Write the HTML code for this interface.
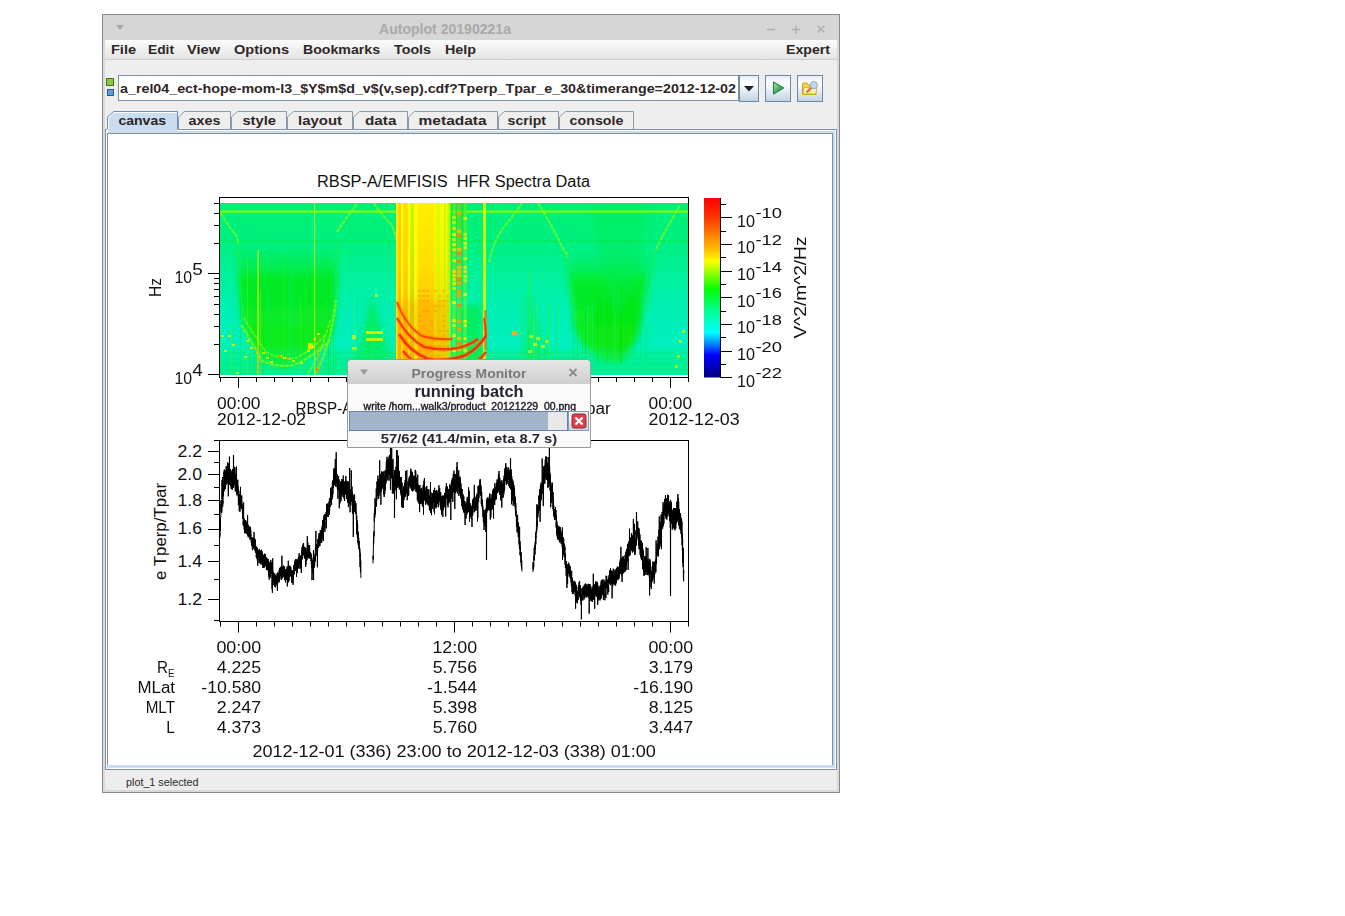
<!DOCTYPE html>
<html><head><meta charset="utf-8"><style>
html,body{margin:0;padding:0;background:#fff;width:1345px;height:916px;overflow:hidden}
svg{display:block;font-family:"Liberation Sans", sans-serif}
</style></head><body>
<svg width="1345" height="916" viewBox="0 0 1345 916">
<defs><linearGradient id="menug" x1="0" y1="0" x2="0" y2="1"><stop offset="0" stop-color="#fbfbfb"/><stop offset="1" stop-color="#e4e4e4"/></linearGradient><linearGradient id="btng" x1="0" y1="0" x2="0" y2="1"><stop offset="0" stop-color="#e4ecf6"/><stop offset="0.3" stop-color="#ffffff"/><stop offset="1" stop-color="#bfd2e6"/></linearGradient><linearGradient id="playg" x1="0" y1="0" x2="1" y2="1"><stop offset="0" stop-color="#c0e4c0"/><stop offset="0.6" stop-color="#40a850"/><stop offset="1" stop-color="#2a8a3a"/></linearGradient><linearGradient id="pmtitle" x1="0" y1="0" x2="0" y2="1"><stop offset="0" stop-color="#e6e6e6"/><stop offset="1" stop-color="#cfcfcf"/></linearGradient><linearGradient id="cbar" x1="0" y1="0" x2="0" y2="1"><stop offset="0" stop-color="#ff0000"/><stop offset="0.10" stop-color="#ff3000"/><stop offset="0.207" stop-color="#ff8000"/><stop offset="0.29" stop-color="#ffc000"/><stop offset="0.35" stop-color="#ffff00"/><stop offset="0.37" stop-color="#e0ff00"/><stop offset="0.43" stop-color="#80ff00"/><stop offset="0.51" stop-color="#00ff00"/><stop offset="0.61" stop-color="#00ff80"/><stop offset="0.68" stop-color="#00ffc0"/><stop offset="0.75" stop-color="#00ffff"/><stop offset="0.815" stop-color="#0080ff"/><stop offset="0.875" stop-color="#0000ff"/><stop offset="1" stop-color="#000080"/></linearGradient></defs>
<rect x="102" y="14" width="738" height="779" fill="#8a8a8a"/>
<rect x="103" y="15" width="736" height="777" fill="#d9d9d9"/>
<rect x="103" y="15" width="736" height="25" fill="#d6d6d6"/>
<path d="M116 25 L124 25 L120 30 Z" fill="#a8a8a8"/>
<text x="445" y="34" font-size="14" font-weight="bold" fill="#a9a9a9" textLength="132" lengthAdjust="spacingAndGlyphs" text-anchor="middle">Autoplot 20190221a</text>
<g stroke="#b0b0b0" stroke-width="1.6" fill="none"><line x1="767" y1="29.5" x2="775" y2="29.5"/><line x1="792" y1="29.5" x2="800" y2="29.5"/><line x1="796" y1="25.5" x2="796" y2="33.5"/><line x1="817.5" y1="25.5" x2="824.5" y2="32.5"/><line x1="824.5" y1="25.5" x2="817.5" y2="32.5"/></g>
<rect x="105" y="40" width="732" height="19" fill="url(#menug)"/>
<rect x="105" y="59" width="732" height="1" fill="#cdcdcd"/>
<rect x="105" y="60" width="732" height="710" fill="#eeeeee"/>
<text x="111" y="54" font-size="13" font-weight="bold" fill="#2e2626" textLength="25" lengthAdjust="spacingAndGlyphs">File</text>
<text x="148" y="54" font-size="13" font-weight="bold" fill="#2e2626" textLength="26" lengthAdjust="spacingAndGlyphs">Edit</text>
<text x="187" y="54" font-size="13" font-weight="bold" fill="#2e2626" textLength="33" lengthAdjust="spacingAndGlyphs">View</text>
<text x="234" y="54" font-size="13" font-weight="bold" fill="#2e2626" textLength="55" lengthAdjust="spacingAndGlyphs">Options</text>
<text x="303" y="54" font-size="13" font-weight="bold" fill="#2e2626" textLength="77" lengthAdjust="spacingAndGlyphs">Bookmarks</text>
<text x="394" y="54" font-size="13" font-weight="bold" fill="#2e2626" textLength="37" lengthAdjust="spacingAndGlyphs">Tools</text>
<text x="445" y="54" font-size="13" font-weight="bold" fill="#2e2626" textLength="31" lengthAdjust="spacingAndGlyphs">Help</text>
<text x="786" y="54" font-size="13" font-weight="bold" fill="#2e2626" textLength="44" lengthAdjust="spacingAndGlyphs">Expert</text>
<rect x="106.5" y="78.5" width="7" height="7" fill="#8dc63f" stroke="#3a7a10" stroke-width="1"/>
<rect x="107.5" y="89.5" width="6" height="6" fill="#5aa0d8" stroke="#2a5a90" stroke-width="1"/>
<rect x="118.5" y="75.5" width="620" height="25" fill="#ffffff" stroke="#7d8ea3" stroke-width="1"/>
<text x="120" y="93" font-size="13.5" font-weight="bold" fill="#2e2626" textLength="616" lengthAdjust="spacingAndGlyphs">a_rel04_ect-hope-mom-l3_$Y$m$d_v$(v,sep).cdf?Tperp_Tpar_e_30&amp;timerange=2012-12-02</text>
<rect x="739.5" y="75.5" width="19" height="26" fill="url(#btng)" stroke="#73879c" stroke-width="1"/>
<path d="M744 86 L754 86 L749 91.5 Z" fill="#222"/>
<rect x="765.5" y="75.5" width="25" height="26" fill="url(#btng)" stroke="#73879c" stroke-width="1"/>
<path d="M773.5 82 L783.5 88 L773.5 94 Z" fill="url(#playg)" stroke="#1e8a3a" stroke-width="1.1" stroke-linejoin="round"/>
<rect x="797.5" y="75.5" width="25" height="26" fill="url(#btng)" stroke="#73879c" stroke-width="1"/>
<path d="M802.5 84 Q802.5 83 803.5 83 L807 83 L808.5 85 L816 85 L816 94.5 L802.5 94.5 Z" fill="#f0d060" stroke="#c8a010" stroke-width="1"/>
<path d="M804 87.5 L817 87.5 L815.5 94 L803 94 Z" fill="#fff2a8" stroke="#d8b020" stroke-width="0.8"/>
<line x1="806.5" y1="92.5" x2="811.5" y2="87.5" stroke="#f06a20" stroke-width="2.2"/>
<circle cx="813.8" cy="85.2" r="3.6" fill="#b8d8fa" stroke="#9aa8b8" stroke-width="1"/>
<path d="M107.5 130 L107.5 117 L113.5 111.5 L177.5 111.5 L177.5 130" fill="#c9dcf0" stroke="#6a8cc4" stroke-width="1"/>
<path d="M108.5 130 L108.5 117.5 L114 112.5 L176.5 112.5" fill="none" stroke="#ffffff" stroke-width="1"/>
<text x="118.4" y="125" font-size="13" font-weight="bold" fill="#2e2626" textLength="47.6" lengthAdjust="spacingAndGlyphs">canvas</text>
<path d="M178.5 130 L178.5 117 L184.5 111.5 L230.5 111.5 L230.5 130" fill="#eeeeee" stroke="#8a9aab" stroke-width="1"/>
<text x="188.6" y="125" font-size="13" font-weight="bold" fill="#2e2626" textLength="31.8" lengthAdjust="spacingAndGlyphs">axes</text>
<path d="M231.5 130 L231.5 117 L237.5 111.5 L286.5 111.5 L286.5 130" fill="#eeeeee" stroke="#8a9aab" stroke-width="1"/>
<text x="242.4" y="125" font-size="13" font-weight="bold" fill="#2e2626" textLength="33.6" lengthAdjust="spacingAndGlyphs">style</text>
<path d="M287.5 130 L287.5 117 L293.5 111.5 L352.5 111.5 L352.5 130" fill="#eeeeee" stroke="#8a9aab" stroke-width="1"/>
<text x="298" y="125" font-size="13" font-weight="bold" fill="#2e2626" textLength="44" lengthAdjust="spacingAndGlyphs">layout</text>
<path d="M353.5 130 L353.5 117 L359.5 111.5 L407.5 111.5 L407.5 130" fill="#eeeeee" stroke="#8a9aab" stroke-width="1"/>
<text x="365" y="125" font-size="13" font-weight="bold" fill="#2e2626" textLength="31.4" lengthAdjust="spacingAndGlyphs">data</text>
<path d="M408.5 130 L408.5 117 L414.5 111.5 L497.5 111.5 L497.5 130" fill="#eeeeee" stroke="#8a9aab" stroke-width="1"/>
<text x="418.6" y="125" font-size="13" font-weight="bold" fill="#2e2626" textLength="68" lengthAdjust="spacingAndGlyphs">metadata</text>
<path d="M498.5 130 L498.5 117 L504.5 111.5 L558.5 111.5 L558.5 130" fill="#eeeeee" stroke="#8a9aab" stroke-width="1"/>
<text x="507.6" y="125" font-size="13" font-weight="bold" fill="#2e2626" textLength="38.4" lengthAdjust="spacingAndGlyphs">script</text>
<path d="M559.5 130 L559.5 117 L565.5 111.5 L633.5 111.5 L633.5 130" fill="#eeeeee" stroke="#8a9aab" stroke-width="1"/>
<text x="569.6" y="125" font-size="13" font-weight="bold" fill="#2e2626" textLength="53.8" lengthAdjust="spacingAndGlyphs">console</text>
<rect x="105" y="129" width="732" height="641" fill="#6d8fc6"/>
<rect x="106" y="130" width="730" height="639" fill="#ffffff"/>
<rect x="107" y="131" width="728" height="637" fill="#c9dcf0"/>
<rect x="107" y="133" width="726" height="632" fill="#7a8ea4"/>
<rect x="108" y="134" width="724" height="631" fill="#ffffff"/>
<rect x="105.5" y="129.5" width="731" height="640" fill="none" stroke="#7b93b0" stroke-width="1"/>
<rect x="108" y="129" width="69.5" height="4" fill="#c9dcf0"/>
<rect x="107" y="129" width="1" height="4" fill="#ffffff"/>
<rect x="105" y="770" width="732" height="20" fill="#ededed"/>
<text x="126" y="786" font-size="11" fill="#2e2626" textLength="72.5" lengthAdjust="spacingAndGlyphs">plot_1 selected</text>
<text x="453.5" y="187" font-size="16" fill="#111" textLength="273" lengthAdjust="spacingAndGlyphs" text-anchor="middle">RBSP-A/EMFISIS  HFR Spectra Data</text>
<defs><clipPath id="spclip"><rect x="220" y="203" width="468" height="172"/></clipPath><linearGradient id="spbase" x1="0" y1="0" x2="0" y2="1"><stop offset="0" stop-color="#00f074"/><stop offset="0.22" stop-color="#00f080"/><stop offset="0.4" stop-color="#00f098"/><stop offset="0.62" stop-color="#00f0b4"/><stop offset="0.85" stop-color="#00f0c0"/><stop offset="1" stop-color="#00f0a0"/></linearGradient><linearGradient id="ybase" x1="0" y1="0" x2="0" y2="1"><stop offset="0" stop-color="#ffff00"/><stop offset="0.35" stop-color="#ffe800"/><stop offset="0.6" stop-color="#ffc400"/><stop offset="1" stop-color="#ffa800"/></linearGradient><linearGradient id="ugr" x1="0" y1="0" x2="0" y2="1"><stop offset="0" stop-color="#00ee30" stop-opacity="0"/><stop offset="0.3" stop-color="#00ea10" stop-opacity="0.85"/><stop offset="1" stop-color="#18ea00" stop-opacity="0.85"/></linearGradient><filter id="blur4" x="-20%" y="-20%" width="140%" height="140%"><feGaussianBlur stdDeviation="3"/></filter><filter id="blur1" x="-20%" y="-20%" width="140%" height="140%"><feGaussianBlur stdDeviation="0.7"/></filter></defs>
<g clip-path="url(#spclip)">
<rect x="220" y="203" width="468" height="172" fill="url(#spbase)"/>
<g filter="url(#blur4)"><path d="M237 243 L240 300 Q241 325 249 337 Q256 352 262 361 Q279 370 294 366 Q315 356 330 340 Q336 318 336 300 L337 243 Z" fill="url(#ugr)"/><path d="M566 255 Q572 290 574 325 Q580 345 590 352 Q604 364 620 362 Q634 352 642 317 Q646 290 650 262 L655 250 Z" fill="url(#ugr)"/><ellipse cx="618" cy="322" rx="24" ry="34" fill="#00e000" opacity="0.35"/><path d="M590 203 L600 257 Q608 290 618 317 Q630 290 640 257 L648 203 Z" fill="#00ec50" opacity="0.45"/><path d="M352 374 L372 296 L394 374 Z" fill="#00ea20" opacity="0.55"/><path d="M522 374 L532 290 L552 374 Z" fill="#00ea30" opacity="0.35"/><rect x="220" y="350" width="468" height="26" fill="#00f070" opacity="0.35"/></g>
<rect x="240.0" y="277" width="1" height="98" fill="#00e830" opacity="0.52"/>
<rect x="247.0" y="262" width="1" height="113" fill="#70f400" opacity="0.39"/>
<rect x="250.0" y="293" width="1" height="82" fill="#30ec00" opacity="0.42"/>
<rect x="254.0" y="298" width="1" height="77" fill="#00e000" opacity="0.31"/>
<rect x="257.0" y="286" width="1" height="89" fill="#70f400" opacity="0.45"/>
<rect x="260.0" y="290" width="1" height="85" fill="#70f400" opacity="0.54"/>
<rect x="263.0" y="275" width="1" height="100" fill="#00e830" opacity="0.54"/>
<rect x="268.0" y="292" width="1" height="83" fill="#00f090" opacity="0.32"/>
<rect x="283.0" y="253" width="1" height="122" fill="#70f400" opacity="0.23"/>
<rect x="284.0" y="258" width="1" height="117" fill="#00e830" opacity="0.35"/>
<rect x="289.0" y="279" width="1" height="96" fill="#00f090" opacity="0.51"/>
<rect x="292.0" y="254" width="1" height="121" fill="#00f090" opacity="0.39"/>
<rect x="300.0" y="298" width="1" height="77" fill="#70f400" opacity="0.33"/>
<rect x="306.0" y="286" width="1" height="89" fill="#30ec00" opacity="0.53"/>
<rect x="314.0" y="281" width="1" height="94" fill="#30ec00" opacity="0.22"/>
<rect x="316.0" y="284" width="1" height="91" fill="#00e830" opacity="0.41"/>
<rect x="326.0" y="259" width="1" height="116" fill="#00e830" opacity="0.50"/>
<rect x="328.0" y="269" width="1" height="106" fill="#00e000" opacity="0.54"/>
<rect x="330.0" y="261" width="1" height="114" fill="#00e830" opacity="0.28"/>
<rect x="333.0" y="266" width="1" height="109" fill="#00e830" opacity="0.44"/>
<rect x="335.0" y="293" width="1" height="82" fill="#30ec00" opacity="0.23"/>
<rect x="573.0" y="319" width="1" height="44" fill="#00e000" opacity="0.39"/>
<rect x="575.0" y="322" width="1" height="41" fill="#00f090" opacity="0.26"/>
<rect x="577.0" y="321" width="1" height="42" fill="#00e000" opacity="0.48"/>
<rect x="582.0" y="320" width="1" height="43" fill="#00e830" opacity="0.36"/>
<rect x="585.0" y="308" width="1" height="55" fill="#00e000" opacity="0.52"/>
<rect x="587.0" y="304" width="1" height="59" fill="#00f090" opacity="0.55"/>
<rect x="592.0" y="303" width="1" height="60" fill="#00f090" opacity="0.54"/>
<rect x="597.0" y="292" width="1" height="71" fill="#00e000" opacity="0.52"/>
<rect x="603.0" y="286" width="1" height="77" fill="#00f090" opacity="0.30"/>
<rect x="607.0" y="326" width="1" height="37" fill="#00e000" opacity="0.32"/>
<rect x="613.0" y="290" width="1" height="73" fill="#00f090" opacity="0.51"/>
<rect x="614.0" y="320" width="1" height="43" fill="#30ec00" opacity="0.49"/>
<rect x="615.0" y="309" width="1" height="54" fill="#70f400" opacity="0.22"/>
<rect x="617.0" y="311" width="1" height="52" fill="#00f090" opacity="0.35"/>
<rect x="620.0" y="321" width="1" height="42" fill="#00e000" opacity="0.47"/>
<rect x="621.0" y="283" width="1" height="80" fill="#00e000" opacity="0.50"/>
<rect x="625.0" y="296" width="1" height="67" fill="#00e830" opacity="0.34"/>
<rect x="630.0" y="329" width="1" height="34" fill="#70f400" opacity="0.24"/>
<rect x="636.0" y="303" width="1" height="60" fill="#00f090" opacity="0.33"/>
<rect x="640.0" y="311" width="1" height="52" fill="#00e830" opacity="0.35"/>
<rect x="643.0" y="292" width="1" height="71" fill="#00f090" opacity="0.29"/>
<rect x="646.0" y="324" width="1" height="39" fill="#00e830" opacity="0.33"/>
<rect x="648.0" y="315" width="1" height="48" fill="#00f090" opacity="0.48"/>
<rect x="353.0" y="302" width="1" height="73" fill="#70f400" opacity="0.22"/>
<rect x="357.0" y="291" width="1" height="84" fill="#00e000" opacity="0.21"/>
<rect x="361.0" y="328" width="1" height="47" fill="#00f090" opacity="0.39"/>
<rect x="363.0" y="327" width="1" height="48" fill="#00f090" opacity="0.22"/>
<rect x="371.0" y="325" width="1" height="50" fill="#70f400" opacity="0.29"/>
<rect x="385.0" y="318" width="1" height="57" fill="#00f090" opacity="0.44"/>
<rect x="388.0" y="310" width="1" height="65" fill="#30ec00" opacity="0.26"/>
<rect x="220.0" y="338" width="1" height="37" fill="#30ec00" opacity="0.40"/>
<rect x="231.0" y="324" width="1" height="51" fill="#70f400" opacity="0.27"/>
<rect x="233.0" y="324" width="1" height="51" fill="#30ec00" opacity="0.35"/>
<rect x="238.0" y="342" width="1" height="33" fill="#00f090" opacity="0.21"/>
<rect x="521.0" y="301" width="1" height="74" fill="#30ec00" opacity="0.43"/>
<rect x="524.0" y="299" width="1" height="76" fill="#00e830" opacity="0.25"/>
<rect x="527.0" y="292" width="1" height="83" fill="#30ec00" opacity="0.35"/>
<rect x="528.0" y="303" width="1" height="72" fill="#00e830" opacity="0.21"/>
<rect x="533.0" y="307" width="1" height="68" fill="#70f400" opacity="0.33"/>
<rect x="534.0" y="319" width="1" height="56" fill="#70f400" opacity="0.34"/>
<rect x="536.0" y="304" width="1" height="71" fill="#70f400" opacity="0.24"/>
<rect x="538.0" y="337" width="1" height="38" fill="#00e830" opacity="0.44"/>
<rect x="544.0" y="337" width="1" height="38" fill="#00e830" opacity="0.44"/>
<rect x="547.0" y="305" width="1" height="70" fill="#00f090" opacity="0.46"/>
<rect x="549.0" y="334" width="1" height="41" fill="#70f400" opacity="0.24"/>
<rect x="556.0" y="306" width="1" height="69" fill="#30ec00" opacity="0.45"/>
<rect x="220" y="210.5" width="468" height="2.2" fill="#90ff00" opacity="0.9"/>
<rect x="220" y="240.5" width="468" height="1.5" fill="#00ea40" opacity="0.55"/>
<rect x="220" y="253.5" width="468" height="1" fill="#00ea60" opacity="0.4"/>
<rect x="220" y="352" width="468" height="1" fill="#00e860" opacity="0.3"/>
<rect x="220" y="358" width="468" height="1" fill="#00e860" opacity="0.3"/>
<rect x="220" y="364" width="468" height="1" fill="#00e860" opacity="0.3"/>
<rect x="220" y="369" width="468" height="1" fill="#00e860" opacity="0.3"/>
<path d="M238 241 Q240 290 243 320" fill="none" stroke="#40f000" stroke-width="1.2" opacity="0.4"/>
<path d="M336 300 Q338 262 338 243" fill="none" stroke="#40f000" stroke-width="1.2" opacity="0.4"/>
<path d="M576 321 Q570 280 564 253" fill="none" stroke="#40f000" stroke-width="1.2" opacity="0.4"/>
<path d="M648 310 Q652 270 656 250" fill="none" stroke="#40f000" stroke-width="1.2" opacity="0.4"/>
<g filter="url(#blur1)">
<path d="M221 213 Q228 226 236 235 Q238 240 238 244" fill="none" stroke="#a0ff00" stroke-width="2.1" opacity="0.6" stroke-dasharray="4 1"/>
<path d="M337 232 Q346 218 357 204" fill="none" stroke="#a0ff00" stroke-width="2.4" opacity="0.6" stroke-dasharray="4 1"/>
<path d="M374 203 Q382 216 391 224 Q395 232 396 240" fill="none" stroke="#a0ff00" stroke-width="2.1" opacity="0.6" stroke-dasharray="4 1"/>
<path d="M489 262 Q494 238 508 222 Q516 212 522 203" fill="none" stroke="#a0ff00" stroke-width="2.1" opacity="0.6" stroke-dasharray="4 1"/>
<path d="M538 203 Q552 225 562 247 Q566 252 568 257" fill="none" stroke="#a0ff00" stroke-width="2.1" opacity="0.6" stroke-dasharray="4 1"/>
<path d="M656 249 Q666 229 680 205" fill="none" stroke="#a0ff00" stroke-width="2.1" opacity="0.6" stroke-dasharray="4 1"/>
<path d="M241 325 Q249 337 262 361 Q279 368 294 365 Q315 356 330 340" fill="none" stroke="#a0ff00" stroke-width="2.4" opacity="0.6" stroke-dasharray="4 1"/>
<path d="M244 318 Q252 332 266 352 Q282 360 296 358 Q312 350 326 334" fill="none" stroke="#a0ff00" stroke-width="1.5" opacity="0.6" stroke-dasharray="4 1"/>
<path d="M315 374 Q330 350 336 300" fill="none" stroke="#a0ff00" stroke-width="2.4" opacity="0.6" stroke-dasharray="4 1"/>
<path d="M308 374 Q322 352 330 320" fill="none" stroke="#a0ff00" stroke-width="1.8" opacity="0.6" stroke-dasharray="4 1"/>
</g>
<rect x="262" y="352" width="3" height="2" fill="#e0ff00" opacity="0.85"/>
<rect x="266" y="357" width="3" height="2" fill="#e0ff00" opacity="0.85"/>
<rect x="270" y="361" width="3" height="2" fill="#e0ff00" opacity="0.85"/>
<rect x="279" y="355" width="3" height="2" fill="#e0ff00" opacity="0.85"/>
<rect x="283" y="357" width="3" height="2" fill="#e0ff00" opacity="0.85"/>
<rect x="287" y="358" width="3" height="2" fill="#e0ff00" opacity="0.85"/>
<rect x="292" y="360" width="3" height="2" fill="#e0ff00" opacity="0.85"/>
<rect x="300" y="362" width="3" height="2" fill="#e0ff00" opacity="0.85"/>
<rect x="307" y="350" width="3" height="2" fill="#e0ff00" opacity="0.85"/>
<rect x="311" y="346" width="3" height="2" fill="#e0ff00" opacity="0.85"/>
<rect x="313" y="338" width="3" height="2" fill="#e0ff00" opacity="0.85"/>
<rect x="317" y="333" width="3" height="2" fill="#e0ff00" opacity="0.85"/>
<rect x="246" y="340" width="3" height="2" fill="#e0ff00" opacity="0.85"/>
<rect x="250" y="347" width="3" height="2" fill="#e0ff00" opacity="0.85"/>
<rect x="228" y="335" width="3" height="2" fill="#e0ff00" opacity="0.85"/>
<rect x="232" y="344" width="3" height="2" fill="#e0ff00" opacity="0.85"/>
<rect x="221" y="335" width="3" height="2" fill="#e0ff00" opacity="0.85"/>
<rect x="224" y="350" width="3" height="2" fill="#e0ff00" opacity="0.85"/>
<rect x="236" y="372" width="3" height="2" fill="#e0ff00" opacity="0.85"/>
<rect x="244" y="356" width="3" height="2" fill="#e0ff00" opacity="0.85"/>
<rect x="309" y="345" width="2" height="3" fill="#ff8000" opacity="0.8"/>
<rect x="313" y="338" width="2" height="3" fill="#ff8000" opacity="0.8"/>
<rect x="287" y="357" width="2" height="3" fill="#ff8000" opacity="0.8"/>
<rect x="279" y="355" width="2" height="3" fill="#ff8000" opacity="0.8"/>
<rect x="316" y="368" width="2" height="3" fill="#ff8000" opacity="0.8"/>
<rect x="308" y="343" width="5" height="6" fill="#ffe000" opacity="0.9"/>
<rect x="366" y="331" width="17" height="3" fill="#ffe000" opacity="0.9"/>
<rect x="366" y="338" width="17" height="3" fill="#f0f000" opacity="0.8"/>
<rect x="352" y="335" width="4" height="4" fill="#e0ff00" opacity="0.8"/>
<rect x="352" y="347" width="5" height="3" fill="#c0ff00" opacity="0.7"/>
<rect x="375" y="294" width="3" height="3" fill="#d0ff00" opacity="0.8"/>
<rect x="314" y="203" width="1.2" height="172" fill="#c0ff00" opacity="0.75"/>
<rect x="257.5" y="250" width="1.5" height="124" fill="#d0ff00" opacity="0.75"/>
<rect x="257.5" y="345" width="1.5" height="29" fill="#ff9000" opacity="0.6"/>
<rect x="318" y="335" width="1.5" height="39" fill="#ff9000" opacity="0.5"/>
<rect x="396" y="203" width="53.5" height="172" fill="url(#ybase)"/>
<rect x="396" y="203" width="1.8" height="172" fill="#ffff00" opacity="0.8"/>
<rect x="397.8" y="203" width="3.2" height="172" fill="#ffb000" opacity="0.6"/>
<rect x="401" y="203" width="2.4" height="172" fill="#ffff00" opacity="0.8"/>
<rect x="403.4" y="203" width="4.4" height="172" fill="#ffc000" opacity="0.55"/>
<rect x="407.8" y="203" width="2.2" height="172" fill="#ffff00" opacity="0.9"/>
<rect x="410.6" y="203" width="3.4" height="172" fill="#90f000" opacity="0.55"/>
<rect x="414" y="203" width="3.8" height="172" fill="#ffff00" opacity="0.8"/>
<rect x="417.8" y="203" width="16.7" height="172" fill="#ffd000" opacity="0.35"/>
<rect x="434.5" y="203" width="1.2" height="172" fill="#ffff00" opacity="0.9"/>
<rect x="435.6" y="203" width="4.4" height="172" fill="#c8ff00" opacity="0.6"/>
<rect x="440" y="203" width="9" height="172" fill="#f0ff00" opacity="0.45"/>
<rect x="444" y="203" width="1.5" height="172" fill="#90ff00" opacity="0.6"/>
<rect x="447.5" y="203" width="1.5" height="172" fill="#a0ff00" opacity="0.6"/>
<rect x="418" y="290" width="3" height="2" fill="#ff9000" opacity="0.45"/>
<rect x="422" y="290" width="3" height="2" fill="#ff9000" opacity="0.45"/>
<rect x="426" y="290" width="3" height="2" fill="#ff9000" opacity="0.45"/>
<rect x="434" y="290" width="3" height="2" fill="#ff9000" opacity="0.45"/>
<rect x="442" y="290" width="3" height="2" fill="#ff9000" opacity="0.45"/>
<rect x="418" y="295" width="3" height="2" fill="#ff9000" opacity="0.45"/>
<rect x="422" y="295" width="3" height="2" fill="#ff9000" opacity="0.45"/>
<rect x="426" y="295" width="3" height="2" fill="#ff9000" opacity="0.45"/>
<rect x="438" y="295" width="3" height="2" fill="#ff9000" opacity="0.45"/>
<rect x="446" y="295" width="3" height="2" fill="#ff9000" opacity="0.45"/>
<rect x="418" y="300" width="3" height="2" fill="#ff9000" opacity="0.45"/>
<rect x="422" y="300" width="3" height="2" fill="#ff9000" opacity="0.45"/>
<rect x="426" y="300" width="3" height="2" fill="#ff9000" opacity="0.45"/>
<rect x="438" y="300" width="3" height="2" fill="#ff9000" opacity="0.45"/>
<rect x="442" y="300" width="3" height="2" fill="#ff9000" opacity="0.45"/>
<rect x="446" y="300" width="3" height="2" fill="#ff9000" opacity="0.45"/>
<rect x="434" y="305" width="3" height="2" fill="#ff9000" opacity="0.45"/>
<rect x="438" y="305" width="3" height="2" fill="#ff9000" opacity="0.45"/>
<rect x="442" y="305" width="3" height="2" fill="#ff9000" opacity="0.45"/>
<rect x="422" y="310" width="3" height="2" fill="#ff9000" opacity="0.45"/>
<rect x="426" y="310" width="3" height="2" fill="#ff9000" opacity="0.45"/>
<rect x="434" y="310" width="3" height="2" fill="#ff9000" opacity="0.45"/>
<rect x="418" y="315" width="3" height="2" fill="#ff9000" opacity="0.45"/>
<rect x="442" y="315" width="3" height="2" fill="#ff9000" opacity="0.45"/>
<rect x="418" y="320" width="3" height="2" fill="#ff9000" opacity="0.45"/>
<rect x="430" y="320" width="3" height="2" fill="#ff9000" opacity="0.45"/>
<rect x="442" y="320" width="3" height="2" fill="#ff9000" opacity="0.45"/>
<rect x="418" y="325" width="3" height="2" fill="#ff9000" opacity="0.45"/>
<rect x="422" y="325" width="3" height="2" fill="#ff9000" opacity="0.45"/>
<rect x="430" y="325" width="3" height="2" fill="#ff9000" opacity="0.45"/>
<rect x="442" y="325" width="3" height="2" fill="#ff9000" opacity="0.45"/>
<rect x="426" y="330" width="3" height="2" fill="#ff9000" opacity="0.45"/>
<rect x="438" y="330" width="3" height="2" fill="#ff9000" opacity="0.45"/>
<rect x="442" y="330" width="3" height="2" fill="#ff9000" opacity="0.45"/>
<rect x="446" y="330" width="3" height="2" fill="#ff9000" opacity="0.45"/>
<rect x="418" y="335" width="3" height="2" fill="#ff9000" opacity="0.45"/>
<rect x="430" y="335" width="3" height="2" fill="#ff9000" opacity="0.45"/>
<rect x="442" y="335" width="3" height="2" fill="#ff9000" opacity="0.45"/>
<rect x="434" y="340" width="3" height="2" fill="#ff9000" opacity="0.45"/>
<rect x="418" y="345" width="3" height="2" fill="#ff9000" opacity="0.45"/>
<rect x="426" y="345" width="3" height="2" fill="#ff9000" opacity="0.45"/>
<rect x="430" y="345" width="3" height="2" fill="#ff9000" opacity="0.45"/>
<rect x="434" y="345" width="3" height="2" fill="#ff9000" opacity="0.45"/>
<rect x="438" y="345" width="3" height="2" fill="#ff9000" opacity="0.45"/>
<rect x="442" y="345" width="3" height="2" fill="#ff9000" opacity="0.45"/>
<rect x="446" y="345" width="3" height="2" fill="#ff9000" opacity="0.45"/>
<rect x="418" y="350" width="3" height="2" fill="#ff9000" opacity="0.45"/>
<rect x="430" y="350" width="3" height="2" fill="#ff9000" opacity="0.45"/>
<rect x="438" y="350" width="3" height="2" fill="#ff9000" opacity="0.45"/>
<rect x="442" y="350" width="3" height="2" fill="#ff9000" opacity="0.45"/>
<rect x="418" y="355" width="3" height="2" fill="#ff9000" opacity="0.45"/>
<rect x="422" y="355" width="3" height="2" fill="#ff9000" opacity="0.45"/>
<rect x="434" y="355" width="3" height="2" fill="#ff9000" opacity="0.45"/>
<rect x="438" y="355" width="3" height="2" fill="#ff9000" opacity="0.45"/>
<rect x="418" y="360" width="3" height="2" fill="#ff9000" opacity="0.45"/>
<rect x="422" y="360" width="3" height="2" fill="#ff9000" opacity="0.45"/>
<rect x="426" y="360" width="3" height="2" fill="#ff9000" opacity="0.45"/>
<rect x="434" y="360" width="3" height="2" fill="#ff9000" opacity="0.45"/>
<rect x="438" y="360" width="3" height="2" fill="#ff9000" opacity="0.45"/>
<rect x="442" y="360" width="3" height="2" fill="#ff9000" opacity="0.45"/>
<rect x="446" y="360" width="3" height="2" fill="#ff9000" opacity="0.45"/>
<rect x="418" y="365" width="3" height="2" fill="#ff9000" opacity="0.45"/>
<rect x="422" y="365" width="3" height="2" fill="#ff9000" opacity="0.45"/>
<rect x="426" y="365" width="3" height="2" fill="#ff9000" opacity="0.45"/>
<rect x="430" y="365" width="3" height="2" fill="#ff9000" opacity="0.45"/>
<rect x="434" y="365" width="3" height="2" fill="#ff9000" opacity="0.45"/>
<rect x="438" y="365" width="3" height="2" fill="#ff9000" opacity="0.45"/>
<rect x="442" y="365" width="3" height="2" fill="#ff9000" opacity="0.45"/>
<rect x="446" y="365" width="3" height="2" fill="#ff9000" opacity="0.45"/>
<rect x="418" y="370" width="3" height="2" fill="#ff9000" opacity="0.45"/>
<rect x="422" y="370" width="3" height="2" fill="#ff9000" opacity="0.45"/>
<rect x="426" y="370" width="3" height="2" fill="#ff9000" opacity="0.45"/>
<rect x="434" y="370" width="3" height="2" fill="#ff9000" opacity="0.45"/>
<rect x="438" y="370" width="3" height="2" fill="#ff9000" opacity="0.45"/>
<rect x="442" y="370" width="3" height="2" fill="#ff9000" opacity="0.45"/>
<rect x="446" y="370" width="3" height="2" fill="#ff9000" opacity="0.45"/>
<rect x="396" y="300" width="53.5" height="74" fill="#ff9000" opacity="0.25" filter="url(#blur4)"/>
<rect x="449.5" y="203" width="17.5" height="38" fill="#00e830" opacity="0.6"/>
<rect x="452" y="305" width="30" height="69" fill="#00ea00" opacity="0.45" filter="url(#blur4)"/>
<rect x="449.5" y="241" width="17.5" height="60" fill="#00ec40" opacity="0.5"/>
<rect x="449" y="203" width="1.7" height="172" fill="#c0ff00" opacity="0.7"/>
<rect x="452.4" y="203" width="3.3" height="172" fill="#d0ff00" opacity="0.3"/>
<rect x="452.4" y="216" width="3.3" height="3" fill="#d0ff00" opacity="0.85"/>
<rect x="452.4" y="221" width="3.3" height="3" fill="#d0ff00" opacity="0.85"/>
<rect x="452.4" y="227" width="3.3" height="3" fill="#ffe000" opacity="0.85"/>
<rect x="452.4" y="233" width="3.3" height="3" fill="#ffff00" opacity="0.85"/>
<rect x="452.4" y="238" width="3.3" height="3" fill="#d0ff00" opacity="0.85"/>
<rect x="452.4" y="243" width="3.3" height="3" fill="#ffff00" opacity="0.85"/>
<rect x="452.4" y="248" width="3.3" height="3" fill="#d0ff00" opacity="0.85"/>
<rect x="452.4" y="259" width="3.3" height="3" fill="#ffff00" opacity="0.85"/>
<rect x="452.4" y="270" width="3.3" height="3" fill="#ffe000" opacity="0.85"/>
<rect x="452.4" y="274" width="3.3" height="3" fill="#ffe000" opacity="0.85"/>
<rect x="452.4" y="278" width="3.3" height="3" fill="#d0ff00" opacity="0.85"/>
<rect x="452.4" y="282" width="3.3" height="3" fill="#ffff00" opacity="0.85"/>
<rect x="452.4" y="287" width="3.3" height="3" fill="#d0ff00" opacity="0.85"/>
<rect x="452.4" y="301" width="3.3" height="3" fill="#ffff00" opacity="0.85"/>
<rect x="452.4" y="319" width="3.3" height="3" fill="#ffff00" opacity="0.85"/>
<rect x="452.4" y="324" width="3.3" height="3" fill="#d0ff00" opacity="0.85"/>
<rect x="452.4" y="334" width="3.3" height="3" fill="#ffff00" opacity="0.85"/>
<rect x="452.4" y="349" width="3.3" height="3" fill="#ffff00" opacity="0.85"/>
<rect x="456.8" y="203" width="4.5" height="172" fill="#ffc000" opacity="0.3"/>
<rect x="456.8" y="212" width="4.5" height="3" fill="#ffa000" opacity="0.85"/>
<rect x="456.8" y="230" width="4.5" height="3" fill="#ffc000" opacity="0.85"/>
<rect x="456.8" y="234" width="4.5" height="3" fill="#ff8000" opacity="0.85"/>
<rect x="456.8" y="248" width="4.5" height="3" fill="#ffc000" opacity="0.85"/>
<rect x="456.8" y="252" width="4.5" height="3" fill="#ff8000" opacity="0.85"/>
<rect x="456.8" y="260" width="4.5" height="3" fill="#ff8000" opacity="0.85"/>
<rect x="456.8" y="266" width="4.5" height="3" fill="#ffc000" opacity="0.85"/>
<rect x="456.8" y="270" width="4.5" height="3" fill="#ffc000" opacity="0.85"/>
<rect x="456.8" y="274" width="4.5" height="3" fill="#ffc000" opacity="0.85"/>
<rect x="456.8" y="278" width="4.5" height="3" fill="#ff8000" opacity="0.85"/>
<rect x="456.8" y="282" width="4.5" height="3" fill="#ffa000" opacity="0.85"/>
<rect x="456.8" y="290" width="4.5" height="3" fill="#ffa000" opacity="0.85"/>
<rect x="456.8" y="294" width="4.5" height="3" fill="#ffa000" opacity="0.85"/>
<rect x="456.8" y="304" width="4.5" height="3" fill="#ff8000" opacity="0.85"/>
<rect x="456.8" y="320" width="4.5" height="3" fill="#ffa000" opacity="0.85"/>
<rect x="456.8" y="328" width="4.5" height="3" fill="#ffa000" opacity="0.85"/>
<rect x="456.8" y="337" width="4.5" height="3" fill="#ffc000" opacity="0.85"/>
<rect x="456.8" y="342" width="4.5" height="3" fill="#ff8000" opacity="0.85"/>
<rect x="456.8" y="348" width="4.5" height="3" fill="#ffc000" opacity="0.85"/>
<rect x="463.5" y="203" width="3.3" height="172" fill="#e0ff00" opacity="0.3"/>
<rect x="463.5" y="217" width="3.3" height="3" fill="#ffff00" opacity="0.85"/>
<rect x="463.5" y="233" width="3.3" height="3" fill="#e0ff00" opacity="0.85"/>
<rect x="463.5" y="237" width="3.3" height="3" fill="#ffe000" opacity="0.85"/>
<rect x="463.5" y="242" width="3.3" height="3" fill="#ffff00" opacity="0.85"/>
<rect x="463.5" y="246" width="3.3" height="3" fill="#ffe000" opacity="0.85"/>
<rect x="463.5" y="257" width="3.3" height="3" fill="#e0ff00" opacity="0.85"/>
<rect x="463.5" y="266" width="3.3" height="3" fill="#ffe000" opacity="0.85"/>
<rect x="463.5" y="270" width="3.3" height="3" fill="#ffe000" opacity="0.85"/>
<rect x="463.5" y="275" width="3.3" height="3" fill="#e0ff00" opacity="0.85"/>
<rect x="463.5" y="279" width="3.3" height="3" fill="#e0ff00" opacity="0.85"/>
<rect x="463.5" y="293" width="3.3" height="3" fill="#ffff00" opacity="0.85"/>
<rect x="463.5" y="320" width="3.3" height="3" fill="#ffff00" opacity="0.85"/>
<rect x="463.5" y="324" width="3.3" height="3" fill="#ffe000" opacity="0.85"/>
<rect x="463.5" y="337" width="3.3" height="3" fill="#ffe000" opacity="0.85"/>
<rect x="463.5" y="343" width="3.3" height="3" fill="#ffe000" opacity="0.85"/>
<rect x="463.5" y="349" width="3.3" height="3" fill="#e0ff00" opacity="0.85"/>
<rect x="483" y="203" width="2.8" height="172" fill="#f0ff00" opacity="0.9"/>
<rect x="484" y="310" width="2.5" height="40" fill="#ff4000" opacity="0.6"/>
<g fill="none" stroke-linecap="butt">
<path d="M397 302 Q406 326 422 336 Q438 340 452 339" stroke="#ff9000" stroke-width="5.0" opacity="0.35"/>
<path d="M397 318 Q408 338 424 347 Q442 351 458 348 Q470 345 478 339" stroke="#ff9000" stroke-width="5.4" opacity="0.35"/>
<path d="M399 334 Q410 352 428 359 Q448 362 466 355 Q478 348 486 336" stroke="#ff9000" stroke-width="5.6" opacity="0.35"/>
<path d="M403 351 Q414 365 432 370 Q452 372 470 366 Q480 360 486 352" stroke="#ff9000" stroke-width="5.4" opacity="0.35"/>
<path d="M410 368 Q420 376 436 379" stroke="#ff9000" stroke-width="5.0" opacity="0.35"/>
<path d="M484 318 Q486 330 486 336" stroke="#ff9000" stroke-width="5.0" opacity="0.35"/>
<path d="M397 302 Q406 326 422 336 Q438 340 452 339" stroke="#ff2a00" stroke-width="2.0" opacity="0.8"/>
<path d="M397 318 Q408 338 424 347 Q442 351 458 348 Q470 345 478 339" stroke="#ff2a00" stroke-width="2.4" opacity="0.9"/>
<path d="M399 334 Q410 352 428 359 Q448 362 466 355 Q478 348 486 336" stroke="#ff2a00" stroke-width="2.6" opacity="0.95"/>
<path d="M403 351 Q414 365 432 370 Q452 372 470 366 Q480 360 486 352" stroke="#ff2a00" stroke-width="2.4" opacity="0.9"/>
<path d="M410 368 Q420 376 436 379" stroke="#ff2a00" stroke-width="2.0" opacity="0.8"/>
<path d="M484 318 Q486 330 486 336" stroke="#ff2a00" stroke-width="2.0" opacity="0.8"/>
</g>
<rect x="512" y="331" width="5" height="4" fill="#ffb000" opacity="0.9"/>
<rect x="529" y="335" width="4" height="3" fill="#e8ff00" opacity="0.7"/>
<rect x="533" y="343" width="4" height="3" fill="#e8ff00" opacity="0.7"/>
<rect x="541" y="345" width="4" height="3" fill="#e8ff00" opacity="0.7"/>
<rect x="528" y="350" width="4" height="3" fill="#e8ff00" opacity="0.7"/>
<rect x="545" y="340" width="4" height="3" fill="#e8ff00" opacity="0.7"/>
<rect x="536" y="337" width="4" height="3" fill="#e8ff00" opacity="0.7"/>
<rect x="529" y="270" width="1" height="104" fill="#40f000" opacity="0.6"/>
<rect x="548" y="300" width="1" height="74" fill="#40f000" opacity="0.5"/>
<rect x="677" y="355" width="3" height="3" fill="#d0ff00" opacity="0.7"/>
<rect x="679" y="340" width="3" height="3" fill="#d0ff00" opacity="0.7"/>
<rect x="675" y="365" width="3" height="3" fill="#d0ff00" opacity="0.7"/>
<rect x="682" y="330" width="3" height="3" fill="#d0ff00" opacity="0.7"/>
</g>
<rect x="219.5" y="197.5" width="469" height="180" fill="none" stroke="#000" stroke-width="1"/>
<line x1="208" y1="374.5" x2="219.5" y2="374.5" stroke="#000" stroke-width="1"/>
<line x1="214" y1="344.5" x2="219.5" y2="344.5" stroke="#000" stroke-width="1"/>
<line x1="214" y1="326.5" x2="219.5" y2="326.5" stroke="#000" stroke-width="1"/>
<line x1="214" y1="314.5" x2="219.5" y2="314.5" stroke="#000" stroke-width="1"/>
<line x1="214" y1="304.5" x2="219.5" y2="304.5" stroke="#000" stroke-width="1"/>
<line x1="214" y1="296.5" x2="219.5" y2="296.5" stroke="#000" stroke-width="1"/>
<line x1="214" y1="289.5" x2="219.5" y2="289.5" stroke="#000" stroke-width="1"/>
<line x1="214" y1="283.5" x2="219.5" y2="283.5" stroke="#000" stroke-width="1"/>
<line x1="214" y1="278.5" x2="219.5" y2="278.5" stroke="#000" stroke-width="1"/>
<line x1="208" y1="273.5" x2="219.5" y2="273.5" stroke="#000" stroke-width="1"/>
<line x1="214" y1="243.5" x2="219.5" y2="243.5" stroke="#000" stroke-width="1"/>
<line x1="214" y1="225.5" x2="219.5" y2="225.5" stroke="#000" stroke-width="1"/>
<line x1="214" y1="213.5" x2="219.5" y2="213.5" stroke="#000" stroke-width="1"/>
<line x1="214" y1="203.5" x2="219.5" y2="203.5" stroke="#000" stroke-width="1"/>
<text x="174.5" y="383.5" font-size="16" fill="#111" textLength="17.6" lengthAdjust="spacingAndGlyphs">10</text>
<text x="192.3" y="375.5" font-size="16" fill="#111" textLength="10.5" lengthAdjust="spacingAndGlyphs">4</text>
<text x="174.5" y="282.5" font-size="16" fill="#111" textLength="17.6" lengthAdjust="spacingAndGlyphs">10</text>
<text x="192.3" y="274.5" font-size="16" fill="#111" textLength="10.5" lengthAdjust="spacingAndGlyphs">5</text>
<text x="0" y="0" font-size="16" fill="#111" textLength="19" lengthAdjust="spacingAndGlyphs" text-anchor="middle" transform="translate(161,287.5) rotate(-90)">Hz</text>
<line x1="220.5" y1="377" x2="220.5" y2="382" stroke="#000" stroke-width="1"/>
<line x1="238.5" y1="377" x2="238.5" y2="388" stroke="#000" stroke-width="1"/>
<line x1="256.5" y1="377" x2="256.5" y2="382" stroke="#000" stroke-width="1"/>
<line x1="274.5" y1="377" x2="274.5" y2="382" stroke="#000" stroke-width="1"/>
<line x1="292.5" y1="377" x2="292.5" y2="382" stroke="#000" stroke-width="1"/>
<line x1="310.5" y1="377" x2="310.5" y2="382" stroke="#000" stroke-width="1"/>
<line x1="328.5" y1="377" x2="328.5" y2="382" stroke="#000" stroke-width="1"/>
<line x1="346.5" y1="377" x2="346.5" y2="382" stroke="#000" stroke-width="1"/>
<line x1="364.5" y1="377" x2="364.5" y2="382" stroke="#000" stroke-width="1"/>
<line x1="382.5" y1="377" x2="382.5" y2="382" stroke="#000" stroke-width="1"/>
<line x1="400.5" y1="377" x2="400.5" y2="382" stroke="#000" stroke-width="1"/>
<line x1="418.5" y1="377" x2="418.5" y2="382" stroke="#000" stroke-width="1"/>
<line x1="436.5" y1="377" x2="436.5" y2="382" stroke="#000" stroke-width="1"/>
<line x1="454.5" y1="377" x2="454.5" y2="388" stroke="#000" stroke-width="1"/>
<line x1="472.5" y1="377" x2="472.5" y2="382" stroke="#000" stroke-width="1"/>
<line x1="490.5" y1="377" x2="490.5" y2="382" stroke="#000" stroke-width="1"/>
<line x1="508.5" y1="377" x2="508.5" y2="382" stroke="#000" stroke-width="1"/>
<line x1="526.5" y1="377" x2="526.5" y2="382" stroke="#000" stroke-width="1"/>
<line x1="544.5" y1="377" x2="544.5" y2="382" stroke="#000" stroke-width="1"/>
<line x1="562.5" y1="377" x2="562.5" y2="382" stroke="#000" stroke-width="1"/>
<line x1="580.5" y1="377" x2="580.5" y2="382" stroke="#000" stroke-width="1"/>
<line x1="598.5" y1="377" x2="598.5" y2="382" stroke="#000" stroke-width="1"/>
<line x1="616.5" y1="377" x2="616.5" y2="382" stroke="#000" stroke-width="1"/>
<line x1="634.5" y1="377" x2="634.5" y2="382" stroke="#000" stroke-width="1"/>
<line x1="652.5" y1="377" x2="652.5" y2="382" stroke="#000" stroke-width="1"/>
<line x1="670.5" y1="377" x2="670.5" y2="388" stroke="#000" stroke-width="1"/>
<line x1="688.5" y1="377" x2="688.5" y2="382" stroke="#000" stroke-width="1"/>
<text x="217" y="408.5" font-size="16" fill="#111" textLength="43.5" lengthAdjust="spacingAndGlyphs">00:00</text>
<text x="217" y="424.5" font-size="16" fill="#111" textLength="89" lengthAdjust="spacingAndGlyphs">2012-12-02</text>
<text x="648.6" y="408.5" font-size="16" fill="#111" textLength="43.5" lengthAdjust="spacingAndGlyphs">00:00</text>
<text x="648.6" y="424.5" font-size="16" fill="#111" textLength="91" lengthAdjust="spacingAndGlyphs">2012-12-03</text>
<text x="295.6" y="413.5" font-size="16" fill="#111" textLength="61.05" lengthAdjust="spacingAndGlyphs">RBSP-A/</text>
<text x="610.8" y="413.5" font-size="16" fill="#111" textLength="35.18" lengthAdjust="spacingAndGlyphs" text-anchor="end">Tpar</text>
<rect x="704" y="198" width="16" height="179.5" fill="url(#cbar)"/>
<line x1="720.5" y1="198" x2="720.5" y2="378" stroke="#000" stroke-width="1"/>
<line x1="720.5" y1="377.5" x2="732" y2="377.5" stroke="#000" stroke-width="1"/>
<line x1="720.5" y1="364.5" x2="726" y2="364.5" stroke="#000" stroke-width="1"/>
<line x1="720.5" y1="351.5" x2="732" y2="351.5" stroke="#000" stroke-width="1"/>
<line x1="720.5" y1="337.5" x2="726" y2="337.5" stroke="#000" stroke-width="1"/>
<line x1="720.5" y1="324.5" x2="732" y2="324.5" stroke="#000" stroke-width="1"/>
<line x1="720.5" y1="311.5" x2="726" y2="311.5" stroke="#000" stroke-width="1"/>
<line x1="720.5" y1="297.5" x2="732" y2="297.5" stroke="#000" stroke-width="1"/>
<line x1="720.5" y1="284.5" x2="726" y2="284.5" stroke="#000" stroke-width="1"/>
<line x1="720.5" y1="271.5" x2="732" y2="271.5" stroke="#000" stroke-width="1"/>
<line x1="720.5" y1="257.5" x2="726" y2="257.5" stroke="#000" stroke-width="1"/>
<line x1="720.5" y1="244.5" x2="732" y2="244.5" stroke="#000" stroke-width="1"/>
<line x1="720.5" y1="231.5" x2="726" y2="231.5" stroke="#000" stroke-width="1"/>
<line x1="720.5" y1="217.5" x2="732" y2="217.5" stroke="#000" stroke-width="1"/>
<line x1="720.5" y1="204.5" x2="726" y2="204.5" stroke="#000" stroke-width="1"/>
<text x="737" y="226.5" font-size="16" fill="#111" textLength="18" lengthAdjust="spacingAndGlyphs">10</text>
<text x="755.5" y="218.2" font-size="14" fill="#111" textLength="26.5" lengthAdjust="spacingAndGlyphs">-10</text>
<text x="737" y="253.2" font-size="16" fill="#111" textLength="18" lengthAdjust="spacingAndGlyphs">10</text>
<text x="755.5" y="244.9" font-size="14" fill="#111" textLength="26.5" lengthAdjust="spacingAndGlyphs">-12</text>
<text x="737" y="279.8" font-size="16" fill="#111" textLength="18" lengthAdjust="spacingAndGlyphs">10</text>
<text x="755.5" y="271.5" font-size="14" fill="#111" textLength="26.5" lengthAdjust="spacingAndGlyphs">-14</text>
<text x="737" y="306.5" font-size="16" fill="#111" textLength="18" lengthAdjust="spacingAndGlyphs">10</text>
<text x="755.5" y="298.2" font-size="14" fill="#111" textLength="26.5" lengthAdjust="spacingAndGlyphs">-16</text>
<text x="737" y="333.2" font-size="16" fill="#111" textLength="18" lengthAdjust="spacingAndGlyphs">10</text>
<text x="755.5" y="324.9" font-size="14" fill="#111" textLength="26.5" lengthAdjust="spacingAndGlyphs">-18</text>
<text x="737" y="359.9" font-size="16" fill="#111" textLength="18" lengthAdjust="spacingAndGlyphs">10</text>
<text x="755.5" y="351.6" font-size="14" fill="#111" textLength="26.5" lengthAdjust="spacingAndGlyphs">-20</text>
<text x="737" y="386.5" font-size="16" fill="#111" textLength="18" lengthAdjust="spacingAndGlyphs">10</text>
<text x="755.5" y="378.2" font-size="14" fill="#111" textLength="26.5" lengthAdjust="spacingAndGlyphs">-22</text>
<text x="0" y="0" font-size="16" fill="#111" textLength="102" lengthAdjust="spacingAndGlyphs" text-anchor="middle" transform="translate(806,287.5) rotate(-90)">V^2/m^2/Hz</text>
<path d="M219.50 540.8 L219.60 538.8 L219.70 534.1 L219.80 532.4 L219.90 536.6 L220.00 522.4 L220.10 531.3 L220.20 518.5 L220.30 528.8 L220.40 526.8 L220.50 518.8 L220.60 518.3 L220.70 516.2 L220.80 516.3 L220.90 504.2 L221.00 510.1 L221.10 500.3 L221.20 512.0 L221.30 500.4 L221.40 512.3 L221.50 512.4 L221.60 505.0 L221.70 500.5 L221.80 512.6 L221.90 506.4 L222.00 479.8 L222.10 498.9 L222.20 491.9 L222.30 492.3 L222.40 496.9 L222.50 491.5 L222.60 477.0 L222.70 506.8 L222.80 500.7 L222.90 503.5 L223.00 500.5 L223.10 494.6 L223.20 489.2 L223.30 492.8 L223.40 492.2 L223.50 496.3 L223.60 484.1 L223.70 487.1 L223.80 491.6 L223.90 471.6 L224.00 475.3 L224.10 481.1 L224.20 490.5 L224.30 469.6 L224.40 484.6 L224.50 472.7 L224.60 483.8 L224.70 488.9 L224.80 483.5 L224.90 477.8 L225.00 488.8 L225.10 476.3 L225.20 474.5 L225.30 478.5 L225.40 486.4 L225.50 488.6 L225.60 470.3 L225.70 472.6 L225.80 475.6 L225.90 477.3 L226.00 485.2 L226.10 476.0 L226.20 466.0 L226.30 466.0 L226.40 478.3 L226.50 466.9 L226.60 469.0 L226.70 470.6 L226.80 483.0 L226.90 466.7 L227.00 476.5 L227.10 472.1 L227.20 467.6 L227.30 468.6 L227.40 479.9 L227.50 462.5 L227.60 479.6 L227.70 483.1 L227.80 483.9 L227.90 480.0 L228.00 464.8 L228.10 480.1 L228.20 469.3 L228.30 496.3 L228.40 473.2 L228.50 474.4 L228.60 473.0 L228.70 463.5 L228.80 481.8 L228.90 472.0 L229.00 467.4 L229.10 480.3 L229.20 462.8 L229.30 474.1 L229.40 456.7 L229.50 463.1 L229.60 478.7 L229.70 474.1 L229.80 484.6 L229.90 479.9 L230.00 485.0 L230.10 480.7 L230.20 475.1 L230.30 484.3 L230.40 469.1 L230.50 486.3 L230.60 481.0 L230.70 485.7 L230.80 472.9 L230.90 478.5 L231.00 477.6 L231.10 479.8 L231.20 488.7 L231.30 475.8 L231.40 479.6 L231.50 482.7 L231.60 479.4 L231.70 489.2 L231.80 473.6 L231.90 470.6 L232.00 486.5 L232.10 479.0 L232.20 472.6 L232.30 489.6 L232.40 473.9 L232.50 469.1 L232.60 485.6 L232.70 480.6 L232.80 482.7 L232.90 483.9 L233.00 485.8 L233.10 470.0 L233.20 487.7 L233.30 480.8 L233.40 480.2 L233.50 472.7 L233.60 480.6 L233.70 487.5 L233.80 474.4 L233.90 479.7 L234.00 470.3 L234.10 469.9 L234.20 484.7 L234.30 466.9 L234.40 474.1 L234.50 476.0 L234.60 469.3 L234.70 482.9 L234.80 478.6 L234.90 484.6 L235.00 482.7 L235.10 475.7 L235.20 486.7 L235.30 491.4 L235.40 474.4 L235.50 488.7 L235.60 491.2 L235.70 473.8 L235.80 482.8 L235.90 480.6 L236.00 485.1 L236.10 467.4 L236.20 478.5 L236.30 490.0 L236.40 478.9 L236.50 466.6 L236.60 489.5 L236.70 488.0 L236.80 487.5 L236.90 495.3 L237.00 480.8 L237.10 490.7 L237.20 492.1 L237.30 493.8 L237.40 489.9 L237.50 491.4 L237.60 491.6 L237.70 485.2 L237.80 479.7 L237.90 493.1 L238.00 486.2 L238.10 495.7 L238.20 496.6 L238.30 495.1 L238.40 505.2 L238.50 500.4 L238.60 489.7 L238.70 493.9 L238.80 491.0 L238.90 498.2 L239.00 496.9 L239.10 502.7 L239.20 510.7 L239.30 511.4 L239.40 508.1 L239.50 504.3 L239.60 494.2 L239.70 496.5 L239.80 496.9 L239.90 505.2 L240.00 511.5 L240.10 504.2 L240.20 501.5 L240.30 507.1 L240.40 500.7 L240.50 486.9 L240.60 507.2 L240.70 507.9 L240.80 501.2 L240.90 505.8 L241.00 501.0 L241.10 499.2 L241.20 499.5 L241.30 495.8 L241.40 509.0 L241.50 497.3 L241.60 499.0 L241.70 495.5 L241.80 496.6 L241.90 500.6 L242.00 500.6 L242.10 502.8 L242.20 507.9 L242.30 504.5 L242.40 513.3 L242.50 505.9 L242.60 510.3 L242.70 508.8 L242.80 518.8 L242.90 516.2 L243.00 518.9 L243.10 513.3 L243.20 525.4 L243.30 521.8 L243.40 523.5 L243.50 514.0 L243.60 502.4 L243.70 515.8 L243.80 525.7 L243.90 525.4 L244.00 523.5 L244.10 521.6 L244.20 529.5 L244.30 518.8 L244.40 526.8 L244.50 520.8 L244.60 521.7 L244.70 523.7 L244.80 533.4 L244.90 527.0 L245.00 532.9 L245.10 524.6 L245.20 532.3 L245.30 520.4 L245.40 526.5 L245.50 523.7 L245.60 520.4 L245.70 529.4 L245.80 524.0 L245.90 529.9 L246.00 521.7 L246.10 530.5 L246.20 521.4 L246.30 528.3 L246.40 533.9 L246.50 526.4 L246.60 524.6 L246.70 526.3 L246.80 534.1 L246.90 526.3 L247.00 526.6 L247.10 527.2 L247.20 530.2 L247.30 530.1 L247.40 530.7 L247.50 533.9 L247.60 515.2 L247.70 531.6 L247.80 533.1 L247.90 524.5 L248.00 535.7 L248.10 525.0 L248.20 537.3 L248.30 533.3 L248.40 534.9 L248.50 527.3 L248.60 535.2 L248.70 535.1 L248.80 528.6 L248.90 533.6 L249.00 531.6 L249.10 534.1 L249.20 529.6 L249.30 533.4 L249.40 535.5 L249.50 536.7 L249.60 533.2 L249.70 534.4 L249.80 530.3 L249.90 526.4 L250.00 539.3 L250.10 527.1 L250.20 531.2 L250.30 539.6 L250.40 529.9 L250.50 535.2 L250.60 528.4 L250.70 532.8 L250.80 531.1 L250.90 531.7 L251.00 535.5 L251.10 534.9 L251.20 541.4 L251.30 542.4 L251.40 538.9 L251.50 538.4 L251.60 538.2 L251.70 546.0 L251.80 543.9 L251.90 546.0 L252.00 537.1 L252.10 546.4 L252.20 547.0 L252.30 547.5 L252.40 550.2 L252.50 550.1 L252.60 543.6 L252.70 543.1 L252.80 542.8 L252.90 538.6 L253.00 548.5 L253.10 547.3 L253.20 543.8 L253.30 544.5 L253.40 538.9 L253.50 537.9 L253.60 540.8 L253.70 543.3 L253.80 545.7 L253.90 546.4 L254.00 532.1 L254.10 549.1 L254.20 548.1 L254.30 544.2 L254.40 538.7 L254.50 541.4 L254.60 538.2 L254.70 544.4 L254.80 543.1 L254.90 539.6 L255.00 545.3 L255.10 551.2 L255.20 539.5 L255.30 550.3 L255.40 548.6 L255.50 540.7 L255.60 552.9 L255.70 550.5 L255.80 547.3 L255.90 546.5 L256.00 548.3 L256.10 546.7 L256.20 554.1 L256.30 557.7 L256.40 554.7 L256.50 556.7 L256.60 546.8 L256.70 555.2 L256.80 548.1 L256.90 558.3 L257.00 547.6 L257.10 548.7 L257.20 552.6 L257.30 560.4 L257.40 554.5 L257.50 558.5 L257.60 553.0 L257.70 565.7 L257.80 552.3 L257.90 551.4 L258.00 555.8 L258.10 550.5 L258.20 554.0 L258.30 550.3 L258.40 551.3 L258.50 557.3 L258.60 555.0 L258.70 550.7 L258.80 555.1 L258.90 550.7 L259.00 562.9 L259.10 562.2 L259.20 549.0 L259.30 560.4 L259.40 556.2 L259.50 554.3 L259.60 562.6 L259.70 563.0 L259.80 561.0 L259.90 558.8 L260.00 551.6 L260.10 553.1 L260.20 563.8 L260.30 552.6 L260.40 550.4 L260.50 555.6 L260.60 555.5 L260.70 558.9 L260.80 556.7 L260.90 561.4 L261.00 564.5 L261.10 560.8 L261.20 563.0 L261.30 558.9 L261.40 551.7 L261.50 549.8 L261.60 551.3 L261.70 554.7 L261.80 553.6 L261.90 551.0 L262.00 561.1 L262.10 556.8 L262.20 552.8 L262.30 564.9 L262.40 560.5 L262.50 556.7 L262.60 559.8 L262.70 563.5 L262.80 555.5 L262.90 568.0 L263.00 562.3 L263.10 554.8 L263.20 558.7 L263.30 560.5 L263.40 558.7 L263.50 566.8 L263.60 557.3 L263.70 557.1 L263.80 567.7 L263.90 554.8 L264.00 561.1 L264.10 566.8 L264.20 567.5 L264.30 565.5 L264.40 560.5 L264.50 554.8 L264.60 558.8 L264.70 553.8 L264.80 554.9 L264.90 561.6 L265.00 557.7 L265.10 553.9 L265.20 560.2 L265.30 561.7 L265.40 564.3 L265.50 558.8 L265.60 559.1 L265.70 556.8 L265.80 566.3 L265.90 558.1 L266.00 565.4 L266.10 560.0 L266.20 557.4 L266.30 559.0 L266.40 569.9 L266.50 560.2 L266.60 569.9 L266.70 562.1 L266.80 560.9 L266.90 567.5 L267.00 558.7 L267.10 558.1 L267.20 560.3 L267.30 563.8 L267.40 560.6 L267.50 564.4 L267.60 564.6 L267.70 570.4 L267.80 561.0 L267.90 567.7 L268.00 559.4 L268.10 559.7 L268.20 559.1 L268.30 567.1 L268.40 567.9 L268.50 574.4 L268.60 562.9 L268.70 561.0 L268.80 563.1 L268.90 570.3 L269.00 577.3 L269.10 562.6 L269.20 574.9 L269.30 579.7 L269.40 574.1 L269.50 569.4 L269.60 564.4 L269.70 564.3 L269.80 565.4 L269.90 573.2 L270.00 573.5 L270.10 569.1 L270.20 570.4 L270.30 562.4 L270.40 572.3 L270.50 574.5 L270.60 577.6 L270.70 569.1 L270.80 559.9 L270.90 570.1 L271.00 573.3 L271.10 563.9 L271.20 562.4 L271.30 570.7 L271.40 565.6 L271.50 563.0 L271.60 564.2 L271.70 564.0 L271.80 573.7 L271.90 562.5 L272.00 566.9 L272.10 589.4 L272.20 571.7 L272.30 574.4 L272.40 592.8 L272.50 567.0 L272.60 569.9 L272.70 558.3 L272.80 568.7 L272.90 573.7 L273.00 571.6 L273.10 582.6 L273.20 572.8 L273.30 578.7 L273.40 581.6 L273.50 584.8 L273.60 585.1 L273.70 584.3 L273.80 575.1 L273.90 572.8 L274.00 575.8 L274.10 583.9 L274.20 578.2 L274.30 583.5 L274.40 579.8 L274.50 575.4 L274.60 580.7 L274.70 573.7 L274.80 586.8 L274.90 580.8 L275.00 580.8 L275.10 582.7 L275.20 574.7 L275.30 583.7 L275.40 575.1 L275.50 585.1 L275.60 587.3 L275.70 579.3 L275.80 578.3 L275.90 585.3 L276.00 577.0 L276.10 579.6 L276.20 579.9 L276.30 575.4 L276.40 579.2 L276.50 579.7 L276.60 576.7 L276.70 577.5 L276.80 584.1 L276.90 578.5 L277.00 579.4 L277.10 573.4 L277.20 580.6 L277.30 584.0 L277.40 590.8 L277.50 572.6 L277.60 579.6 L277.70 573.3 L277.80 576.9 L277.90 575.1 L278.00 573.1 L278.10 578.1 L278.20 574.9 L278.30 573.8 L278.40 573.2 L278.50 575.1 L278.60 577.3 L278.70 582.6 L278.80 576.2 L278.90 581.3 L279.00 581.9 L279.10 570.3 L279.20 581.4 L279.30 573.5 L279.40 572.1 L279.50 580.2 L279.60 568.1 L279.70 572.9 L279.80 579.2 L279.90 576.7 L280.00 572.3 L280.10 567.8 L280.20 570.4 L280.30 567.8 L280.40 575.8 L280.50 567.9 L280.60 573.3 L280.70 572.2 L280.80 576.4 L280.90 573.6 L281.00 566.8 L281.10 570.3 L281.20 569.6 L281.30 579.7 L281.40 566.5 L281.50 578.6 L281.60 567.6 L281.70 579.1 L281.80 577.8 L281.90 555.7 L282.00 576.3 L282.10 578.2 L282.20 575.4 L282.30 574.5 L282.40 570.6 L282.50 574.1 L282.60 569.9 L282.70 568.7 L282.80 567.7 L282.90 566.7 L283.00 575.5 L283.10 571.7 L283.20 572.0 L283.30 577.2 L283.40 565.5 L283.50 571.7 L283.60 569.9 L283.70 567.7 L283.80 568.6 L283.90 574.5 L284.00 575.3 L284.10 570.0 L284.20 573.3 L284.30 576.3 L284.40 570.8 L284.50 569.2 L284.60 566.6 L284.70 580.2 L284.80 569.2 L284.90 573.8 L285.00 573.9 L285.10 569.0 L285.20 572.0 L285.30 577.3 L285.40 575.8 L285.50 582.4 L285.60 572.7 L285.70 576.1 L285.80 578.8 L285.90 579.5 L286.00 570.9 L286.10 578.1 L286.20 572.3 L286.30 574.2 L286.40 575.5 L286.50 579.7 L286.60 569.1 L286.70 570.4 L286.80 570.2 L286.90 570.5 L287.00 568.5 L287.10 573.8 L287.20 566.3 L287.30 586.4 L287.40 580.8 L287.50 579.2 L287.60 573.1 L287.70 573.1 L287.80 575.6 L287.90 576.8 L288.00 581.6 L288.10 582.6 L288.20 580.6 L288.30 560.7 L288.40 578.9 L288.50 570.0 L288.60 570.2 L288.70 581.4 L288.80 573.6 L288.90 571.8 L289.00 580.7 L289.10 571.6 L289.20 576.3 L289.30 577.3 L289.40 572.9 L289.50 571.5 L289.60 565.8 L289.70 570.4 L289.80 573.7 L289.90 569.3 L290.00 568.7 L290.10 576.8 L290.20 565.9 L290.30 575.3 L290.40 575.8 L290.50 575.3 L290.60 567.6 L290.70 571.4 L290.80 567.1 L290.90 573.0 L291.00 575.3 L291.10 571.0 L291.20 573.0 L291.30 570.5 L291.40 575.3 L291.50 572.8 L291.60 579.5 L291.70 573.4 L291.80 582.7 L291.90 571.9 L292.00 583.1 L292.10 578.0 L292.20 578.0 L292.30 577.5 L292.40 580.8 L292.50 575.8 L292.60 570.2 L292.70 578.2 L292.80 577.7 L292.90 573.7 L293.00 576.6 L293.10 584.8 L293.20 575.2 L293.30 579.3 L293.40 572.2 L293.50 575.3 L293.60 574.7 L293.70 569.4 L293.80 564.9 L293.90 569.3 L294.00 573.6 L294.10 574.3 L294.20 571.7 L294.30 573.8 L294.40 571.4 L294.50 562.2 L294.60 565.1 L294.70 571.0 L294.80 563.0 L294.90 560.3 L295.00 570.3 L295.10 562.6 L295.20 571.0 L295.30 566.6 L295.40 569.8 L295.50 563.7 L295.60 559.0 L295.70 570.3 L295.80 559.8 L295.90 563.4 L296.00 566.5 L296.10 559.1 L296.20 561.2 L296.30 570.7 L296.40 561.5 L296.50 577.0 L296.60 570.9 L296.70 568.5 L296.80 562.5 L296.90 562.2 L297.00 560.6 L297.10 563.8 L297.20 569.0 L297.30 560.7 L297.40 563.7 L297.50 573.1 L297.60 563.2 L297.70 563.5 L297.80 567.7 L297.90 560.4 L298.00 559.3 L298.10 563.2 L298.20 558.5 L298.30 568.5 L298.40 557.0 L298.50 558.5 L298.60 557.6 L298.70 557.4 L298.80 558.9 L298.90 561.4 L299.00 556.5 L299.10 553.1 L299.20 553.3 L299.30 561.5 L299.40 558.8 L299.50 555.0 L299.60 564.4 L299.70 563.0 L299.80 557.0 L299.90 568.8 L300.00 565.7 L300.10 563.8 L300.20 555.8 L300.30 561.9 L300.40 564.1 L300.50 568.2 L300.60 557.9 L300.70 555.6 L300.80 567.2 L300.90 563.7 L301.00 559.3 L301.10 558.4 L301.20 558.1 L301.30 573.0 L301.40 563.1 L301.50 561.3 L301.60 550.6 L301.70 552.9 L301.80 559.4 L301.90 552.3 L302.00 559.5 L302.10 546.9 L302.20 553.2 L302.30 548.3 L302.40 551.8 L302.50 549.3 L302.60 552.3 L302.70 557.5 L302.80 545.8 L302.90 545.0 L303.00 554.1 L303.10 544.5 L303.20 544.6 L303.30 555.3 L303.40 543.2 L303.50 544.4 L303.60 543.1 L303.70 547.1 L303.80 550.8 L303.90 549.4 L304.00 550.5 L304.10 554.0 L304.20 547.7 L304.30 551.4 L304.40 550.0 L304.50 547.4 L304.60 552.7 L304.70 558.9 L304.80 546.9 L304.90 549.6 L305.00 549.2 L305.10 557.3 L305.20 555.3 L305.30 547.9 L305.40 553.8 L305.50 551.7 L305.60 557.9 L305.70 566.9 L305.80 549.7 L305.90 564.7 L306.00 548.0 L306.10 551.8 L306.20 560.6 L306.30 559.1 L306.40 558.3 L306.50 550.4 L306.60 558.3 L306.70 559.4 L306.80 555.4 L306.90 560.2 L307.00 551.9 L307.10 554.5 L307.20 551.8 L307.30 536.2 L307.40 556.9 L307.50 546.3 L307.60 546.0 L307.70 552.9 L307.80 542.5 L307.90 544.7 L308.00 550.3 L308.10 558.3 L308.20 545.4 L308.30 550.6 L308.40 549.8 L308.50 550.6 L308.60 549.0 L308.70 545.4 L308.80 556.3 L308.90 552.2 L309.00 546.1 L309.10 558.0 L309.20 557.6 L309.30 550.4 L309.40 556.5 L309.50 557.0 L309.60 545.3 L309.70 550.6 L309.80 558.7 L309.90 555.7 L310.00 557.3 L310.10 557.1 L310.20 555.3 L310.30 552.2 L310.40 552.7 L310.50 555.5 L310.60 556.6 L310.70 553.9 L310.80 556.1 L310.90 554.3 L311.00 553.3 L311.10 561.1 L311.20 555.0 L311.30 563.8 L311.40 562.9 L311.50 562.2 L311.60 568.0 L311.70 561.2 L311.80 558.6 L311.90 557.5 L312.00 580.2 L312.10 565.3 L312.20 560.2 L312.30 569.7 L312.40 560.8 L312.50 563.2 L312.60 567.8 L312.70 561.9 L312.80 568.6 L312.90 573.5 L313.00 565.5 L313.10 570.2 L313.20 571.9 L313.30 562.9 L313.40 559.0 L313.50 562.0 L313.60 561.6 L313.70 564.5 L313.80 561.3 L313.90 564.1 L314.00 558.7 L314.10 568.0 L314.20 562.8 L314.30 561.9 L314.40 566.8 L314.50 556.5 L314.60 565.6 L314.70 562.7 L314.80 557.2 L314.90 560.5 L315.00 556.5 L315.10 553.5 L315.20 561.5 L315.30 560.7 L315.40 547.3 L315.50 547.0 L315.60 547.1 L315.70 549.8 L315.80 546.0 L315.90 530.9 L316.00 554.8 L316.10 556.0 L316.20 545.4 L316.30 546.7 L316.40 548.9 L316.50 546.3 L316.60 549.2 L316.70 544.0 L316.80 550.7 L316.90 550.5 L317.00 546.4 L317.10 551.8 L317.20 555.3 L317.30 554.1 L317.40 567.3 L317.50 554.2 L317.60 552.3 L317.70 541.1 L317.80 540.4 L317.90 539.2 L318.00 541.5 L318.10 542.7 L318.20 538.9 L318.30 548.1 L318.40 545.0 L318.50 540.1 L318.60 537.4 L318.70 537.3 L318.80 536.7 L318.90 546.3 L319.00 533.3 L319.10 542.9 L319.20 537.0 L319.30 545.1 L319.40 533.9 L319.50 537.2 L319.60 543.7 L319.70 539.8 L319.80 538.1 L319.90 546.2 L320.00 533.0 L320.10 539.4 L320.20 540.4 L320.30 530.0 L320.40 532.6 L320.50 535.2 L320.60 534.7 L320.70 542.8 L320.80 535.2 L320.90 541.3 L321.00 534.7 L321.10 535.4 L321.20 538.7 L321.30 537.1 L321.40 530.4 L321.50 535.9 L321.60 542.9 L321.70 531.5 L321.80 541.8 L321.90 531.6 L322.00 527.7 L322.10 538.8 L322.20 525.8 L322.30 536.0 L322.40 536.0 L322.50 526.5 L322.60 524.1 L322.70 520.1 L322.80 533.0 L322.90 525.9 L323.00 524.1 L323.10 522.7 L323.20 519.9 L323.30 541.0 L323.40 529.6 L323.50 518.3 L323.60 524.9 L323.70 522.4 L323.80 524.0 L323.90 529.8 L324.00 515.3 L324.10 521.7 L324.20 521.2 L324.30 522.8 L324.40 515.3 L324.50 526.9 L324.60 514.5 L324.70 528.2 L324.80 521.3 L324.90 531.9 L325.00 520.9 L325.10 515.8 L325.20 514.1 L325.30 520.0 L325.40 517.3 L325.50 514.2 L325.60 517.4 L325.70 519.0 L325.80 519.1 L325.90 517.2 L326.00 520.0 L326.10 512.4 L326.20 513.3 L326.30 511.7 L326.40 528.3 L326.50 513.1 L326.60 512.8 L326.70 504.1 L326.80 507.8 L326.90 513.1 L327.00 503.8 L327.10 509.6 L327.20 517.0 L327.30 507.8 L327.40 513.1 L327.50 513.0 L327.60 503.7 L327.70 508.0 L327.80 508.9 L327.90 508.0 L328.00 504.8 L328.10 508.5 L328.20 503.5 L328.30 514.4 L328.40 517.0 L328.50 512.2 L328.60 512.8 L328.70 514.5 L328.80 514.9 L328.90 505.2 L329.00 501.6 L329.10 506.2 L329.20 510.0 L329.30 514.7 L329.40 498.7 L329.50 498.6 L329.60 511.1 L329.70 498.1 L329.80 507.3 L329.90 504.1 L330.00 505.0 L330.10 506.7 L330.20 504.3 L330.30 499.5 L330.40 499.8 L330.50 494.3 L330.60 487.9 L330.70 502.1 L330.80 499.7 L330.90 500.6 L331.00 493.7 L331.10 491.1 L331.20 500.2 L331.30 493.4 L331.40 504.2 L331.50 504.9 L331.60 505.0 L331.70 492.7 L331.80 496.2 L331.90 486.6 L332.00 496.2 L332.10 499.2 L332.20 487.2 L332.30 486.8 L332.40 482.1 L332.50 486.6 L332.60 497.4 L332.70 485.3 L332.80 480.4 L332.90 494.0 L333.00 481.9 L333.10 487.5 L333.20 483.7 L333.30 488.0 L333.40 479.1 L333.50 477.5 L333.60 482.3 L333.70 468.7 L333.80 470.9 L333.90 480.4 L334.00 481.0 L334.10 480.1 L334.20 474.6 L334.30 476.0 L334.40 485.4 L334.50 468.0 L334.60 482.1 L334.70 470.2 L334.80 480.3 L334.90 477.1 L335.00 483.6 L335.10 469.6 L335.20 471.3 L335.30 459.2 L335.40 484.1 L335.50 472.6 L335.60 484.1 L335.70 486.8 L335.80 481.6 L335.90 468.0 L336.00 483.1 L336.10 483.3 L336.20 452.3 L336.30 476.8 L336.40 476.4 L336.50 473.6 L336.60 475.8 L336.70 483.9 L336.80 477.5 L336.90 477.3 L337.00 487.1 L337.10 484.8 L337.20 482.5 L337.30 474.5 L337.40 488.8 L337.50 482.9 L337.60 482.8 L337.70 485.5 L337.80 490.2 L337.90 498.8 L338.00 478.5 L338.10 478.4 L338.20 477.5 L338.30 488.1 L338.40 483.6 L338.50 478.3 L338.60 476.0 L338.70 490.8 L338.80 484.2 L338.90 482.7 L339.00 486.9 L339.10 479.5 L339.20 492.4 L339.30 508.3 L339.40 492.2 L339.50 495.9 L339.60 496.6 L339.70 499.6 L339.80 485.2 L339.90 491.9 L340.00 503.3 L340.10 502.4 L340.20 498.1 L340.30 488.1 L340.40 496.4 L340.50 489.6 L340.60 489.0 L340.70 481.7 L340.80 495.2 L340.90 487.7 L341.00 501.0 L341.10 484.2 L341.20 481.7 L341.30 495.3 L341.40 489.5 L341.50 479.1 L341.60 496.5 L341.70 492.7 L341.80 484.3 L341.90 481.3 L342.00 482.8 L342.10 493.1 L342.20 488.2 L342.30 479.5 L342.40 487.5 L342.50 494.4 L342.60 483.9 L342.70 493.0 L342.80 490.5 L342.90 484.3 L343.00 482.0 L343.10 496.9 L343.20 486.7 L343.30 475.5 L343.40 494.9 L343.50 481.6 L343.60 494.5 L343.70 493.1 L343.80 491.6 L343.90 493.0 L344.00 497.9 L344.10 485.0 L344.20 498.0 L344.30 499.4 L344.40 482.5 L344.50 481.5 L344.60 500.9 L344.70 492.7 L344.80 481.8 L344.90 488.8 L345.00 484.7 L345.10 493.5 L345.20 490.8 L345.30 486.7 L345.40 483.7 L345.50 484.7 L345.60 486.4 L345.70 494.4 L345.80 476.1 L345.90 476.5 L346.00 489.4 L346.10 480.5 L346.20 494.6 L346.30 491.8 L346.40 487.0 L346.50 489.4 L346.60 499.1 L346.70 496.0 L346.80 483.8 L346.90 490.4 L347.00 485.7 L347.10 490.7 L347.20 481.9 L347.30 481.1 L347.40 489.8 L347.50 484.4 L347.60 502.7 L347.70 499.5 L347.80 496.3 L347.90 494.3 L348.00 499.4 L348.10 495.2 L348.20 493.4 L348.30 481.5 L348.40 507.1 L348.50 493.2 L348.60 491.6 L348.70 498.8 L348.80 491.5 L348.90 504.3 L349.00 490.8 L349.10 502.5 L349.20 503.8 L349.30 502.5 L349.40 500.4 L349.50 503.6 L349.60 502.1 L349.70 468.1 L349.80 492.5 L349.90 499.8 L350.00 499.5 L350.10 512.3 L350.20 489.3 L350.30 490.0 L350.40 492.3 L350.50 498.0 L350.60 496.9 L350.70 497.8 L350.80 505.3 L350.90 490.6 L351.00 499.6 L351.10 490.0 L351.20 494.9 L351.30 470.4 L351.40 479.8 L351.50 488.4 L351.60 490.7 L351.70 486.3 L351.80 502.2 L351.90 486.7 L352.00 499.2 L352.10 492.7 L352.20 491.9 L352.30 493.0 L352.40 511.6 L352.50 504.6 L352.60 497.3 L352.70 503.8 L352.80 506.7 L352.90 514.0 L353.00 506.7 L353.10 513.0 L353.20 497.3 L353.30 537.0 L353.40 504.6 L353.50 512.6 L353.60 500.6 L353.70 497.5 L353.80 511.4 L353.90 495.3 L354.00 497.8 L354.10 497.3 L354.20 494.3 L354.30 504.9 L354.40 509.1 L354.50 496.9 L354.60 495.1 L354.70 506.7 L354.80 507.3 L354.90 511.9 L355.00 501.0 L355.10 505.7 L355.20 508.0 L355.30 507.3 L355.40 513.2 L355.50 507.5 L355.60 504.1 L355.70 508.1 L355.80 513.9 L355.90 503.0 L356.00 512.4 L356.10 514.1 L356.20 512.4 L356.30 519.8 L356.40 520.1 L356.50 520.3 L356.60 534.4 L356.70 515.4 L356.80 525.0 L356.90 529.8 L357.00 520.2 L357.10 521.7 L357.20 526.0 L357.30 522.2 L357.40 538.0 L357.50 533.5 L357.60 524.1 L357.70 527.4 L357.80 535.0 L357.90 542.6 L358.00 543.1 L358.10 531.7 L358.20 535.9 L358.30 545.1 L358.40 540.8 L358.50 532.0 L358.60 545.8 L358.70 537.8 L358.80 544.7 L358.90 549.2 L359.00 545.3 L359.10 542.8 L359.20 541.0 L359.30 547.8 L359.40 547.5 L359.50 548.7 L359.60 550.4 L359.70 552.6 L359.80 548.4 L359.90 556.6 L360.00 555.0 L360.10 566.9 L360.20 552.8 L360.30 560.3 L360.40 571.3 L360.50 572.3 L360.60 572.2 L360.70 560.5 L360.80 569.2 L360.90 577.9" fill="none" stroke="#000" stroke-width="1"/>
<path d="M373.00 563.4 L373.10 555.8 L373.20 559.4 L373.30 550.5 L373.40 550.6 L373.50 535.7 L373.60 544.0 L373.70 543.2 L373.80 540.7 L373.90 532.3 L374.00 531.3 L374.10 536.4 L374.20 530.1 L374.30 513.6 L374.40 521.5 L374.50 508.8 L374.60 512.5 L374.70 510.4 L374.80 517.7 L374.90 501.6 L375.00 498.7 L375.10 498.1 L375.20 503.6 L375.30 514.4 L375.40 511.9 L375.50 508.6 L375.60 502.3 L375.70 505.6 L375.80 502.2 L375.90 501.3 L376.00 504.2 L376.10 505.4 L376.20 490.2 L376.30 488.4 L376.40 506.6 L376.50 494.8 L376.60 496.6 L376.70 500.3 L376.80 500.9 L376.90 481.9 L377.00 483.0 L377.10 481.6 L377.20 496.0 L377.30 492.9 L377.40 488.8 L377.50 486.7 L377.60 491.3 L377.70 479.0 L377.80 487.8 L377.90 475.6 L378.00 494.3 L378.10 479.3 L378.20 498.4 L378.30 493.7 L378.40 498.3 L378.50 480.0 L378.60 482.9 L378.70 498.9 L378.80 481.3 L378.90 484.3 L379.00 495.8 L379.10 488.6 L379.20 488.8 L379.30 487.8 L379.40 493.2 L379.50 489.2 L379.60 476.5 L379.70 460.4 L379.80 489.7 L379.90 481.8 L380.00 478.2 L380.10 490.6 L380.20 487.7 L380.30 479.0 L380.40 478.5 L380.50 487.7 L380.60 488.8 L380.70 474.3 L380.80 480.5 L380.90 504.7 L381.00 480.3 L381.10 475.3 L381.20 490.6 L381.30 491.4 L381.40 472.8 L381.50 473.4 L381.60 471.4 L381.70 478.8 L381.80 484.3 L381.90 489.4 L382.00 480.1 L382.10 475.3 L382.20 479.0 L382.30 483.8 L382.40 471.9 L382.50 488.1 L382.60 476.7 L382.70 473.1 L382.80 485.4 L382.90 486.4 L383.00 473.9 L383.10 482.0 L383.20 483.6 L383.30 476.4 L383.40 482.8 L383.50 477.0 L383.60 476.4 L383.70 484.2 L383.80 471.3 L383.90 494.8 L384.00 477.0 L384.10 480.7 L384.20 497.0 L384.30 492.4 L384.40 480.5 L384.50 494.3 L384.60 484.9 L384.70 494.2 L384.80 491.7 L384.90 485.0 L385.00 485.6 L385.10 470.6 L385.20 490.7 L385.30 489.7 L385.40 470.1 L385.50 485.8 L385.60 473.2 L385.70 473.4 L385.80 481.8 L385.90 472.1 L386.00 483.5 L386.10 477.0 L386.20 469.8 L386.30 462.3 L386.40 466.2 L386.50 475.3 L386.60 469.3 L386.70 460.5 L386.80 468.5 L386.90 459.4 L387.00 456.8 L387.10 476.8 L387.20 473.3 L387.30 478.3 L387.40 473.3 L387.50 463.6 L387.60 459.7 L387.70 480.3 L387.80 479.3 L387.90 459.1 L388.00 458.7 L388.10 469.7 L388.20 463.1 L388.30 470.2 L388.40 464.5 L388.50 474.2 L388.60 470.1 L388.70 473.3 L388.80 461.5 L388.90 459.3 L389.00 480.7 L389.10 474.5 L389.20 456.3 L389.30 474.4 L389.40 455.2 L389.50 471.5 L389.60 475.4 L389.70 464.5 L389.80 469.6 L389.90 462.3 L390.00 454.9 L390.10 471.1 L390.20 465.2 L390.30 465.3 L390.40 468.0 L390.50 455.4 L390.60 461.6 L390.70 461.4 L390.80 473.0 L390.90 452.0 L391.00 471.8 L391.10 465.7 L391.20 473.5 L391.30 474.2 L391.40 474.2 L391.50 477.7 L391.60 478.1 L391.70 448.1 L391.80 474.0 L391.90 460.4 L392.00 474.9 L392.10 474.5 L392.20 478.8 L392.30 472.1 L392.40 493.4 L392.50 463.7 L392.60 470.7 L392.70 484.4 L392.80 482.7 L392.90 469.4 L393.00 458.9 L393.10 475.8 L393.20 481.3 L393.30 485.5 L393.40 489.8 L393.50 486.9 L393.60 481.0 L393.70 493.7 L393.80 491.0 L393.90 476.5 L394.00 482.6 L394.10 479.1 L394.20 491.8 L394.30 486.5 L394.40 474.5 L394.50 482.0 L394.60 478.1 L394.70 471.8 L394.80 488.7 L394.90 470.0 L395.00 472.8 L395.10 478.2 L395.20 490.3 L395.30 472.2 L395.40 483.4 L395.50 474.6 L395.60 484.5 L395.70 477.1 L395.80 469.9 L395.90 477.7 L396.00 466.7 L396.10 481.7 L396.20 483.9 L396.30 474.7 L396.40 499.2 L396.50 467.6 L396.60 481.1 L396.70 482.9 L396.80 475.0 L396.90 472.1 L397.00 486.1 L397.10 483.4 L397.20 450.4 L397.30 487.9 L397.40 467.5 L397.50 467.2 L397.60 479.8 L397.70 472.6 L397.80 471.0 L397.90 466.8 L398.00 475.2 L398.10 486.7 L398.20 483.9 L398.30 455.6 L398.40 468.9 L398.50 484.3 L398.60 471.2 L398.70 478.2 L398.80 470.6 L398.90 479.3 L399.00 487.4 L399.10 473.9 L399.20 471.1 L399.30 489.6 L399.40 473.3 L399.50 477.9 L399.60 478.3 L399.70 480.4 L399.80 477.0 L399.90 484.5 L400.00 487.9 L400.10 481.6 L400.20 483.8 L400.30 485.2 L400.40 485.9 L400.50 478.6 L400.60 480.5 L400.70 486.2 L400.80 493.1 L400.90 477.0 L401.00 485.1 L401.10 495.4 L401.20 477.0 L401.30 486.9 L401.40 480.5 L401.50 482.5 L401.60 493.1 L401.70 507.1 L401.80 490.2 L401.90 495.2 L402.00 483.1 L402.10 484.1 L402.20 482.8 L402.30 496.6 L402.40 493.7 L402.50 501.4 L402.60 501.7 L402.70 493.6 L402.80 502.7 L402.90 508.0 L403.00 498.0 L403.10 507.9 L403.20 505.6 L403.30 493.1 L403.40 488.4 L403.50 505.1 L403.60 488.8 L403.70 486.6 L403.80 486.3 L403.90 500.0 L404.00 500.1 L404.10 491.5 L404.20 497.6 L404.30 489.6 L404.40 490.0 L404.50 482.8 L404.60 488.6 L404.70 496.2 L404.80 496.9 L404.90 483.1 L405.00 496.1 L405.10 491.9 L405.20 480.0 L405.30 487.0 L405.40 496.5 L405.50 496.4 L405.60 495.5 L405.70 471.0 L405.80 492.7 L405.90 488.8 L406.00 482.4 L406.10 480.1 L406.20 487.1 L406.30 488.2 L406.40 481.6 L406.50 494.1 L406.60 489.5 L406.70 477.5 L406.80 470.1 L406.90 482.2 L407.00 483.5 L407.10 486.6 L407.20 500.2 L407.30 498.8 L407.40 494.7 L407.50 495.6 L407.60 489.2 L407.70 493.7 L407.80 494.7 L407.90 495.8 L408.00 481.5 L408.10 489.2 L408.20 491.0 L408.30 491.7 L408.40 492.7 L408.50 489.7 L408.60 480.6 L408.70 495.6 L408.80 483.1 L408.90 487.2 L409.00 479.9 L409.10 477.5 L409.20 480.8 L409.30 478.6 L409.40 484.7 L409.50 486.6 L409.60 485.7 L409.70 485.0 L409.80 481.4 L409.90 475.8 L410.00 482.8 L410.10 482.8 L410.20 485.3 L410.30 476.5 L410.40 483.3 L410.50 471.2 L410.60 488.0 L410.70 488.5 L410.80 476.1 L410.90 468.7 L411.00 483.5 L411.10 485.2 L411.20 484.6 L411.30 482.6 L411.40 483.5 L411.50 471.6 L411.60 484.8 L411.70 490.7 L411.80 473.9 L411.90 478.3 L412.00 489.8 L412.10 486.3 L412.20 482.3 L412.30 473.4 L412.40 471.8 L412.50 491.4 L412.60 485.8 L412.70 475.8 L412.80 482.0 L412.90 475.1 L413.00 483.1 L413.10 490.7 L413.20 481.2 L413.30 487.9 L413.40 487.4 L413.50 477.3 L413.60 486.2 L413.70 478.7 L413.80 484.1 L413.90 487.1 L414.00 487.0 L414.10 490.2 L414.20 477.7 L414.30 483.8 L414.40 477.1 L414.50 480.4 L414.60 476.1 L414.70 475.8 L414.80 478.9 L414.90 481.4 L415.00 480.2 L415.10 489.0 L415.20 471.2 L415.30 469.9 L415.40 487.0 L415.50 470.8 L415.60 480.8 L415.70 471.1 L415.80 471.3 L415.90 477.9 L416.00 491.8 L416.10 489.7 L416.20 491.1 L416.30 477.5 L416.40 482.7 L416.50 492.2 L416.60 478.0 L416.70 491.2 L416.80 487.5 L416.90 481.1 L417.00 487.3 L417.10 482.4 L417.20 490.5 L417.30 499.6 L417.40 500.3 L417.50 491.1 L417.60 483.3 L417.70 474.6 L417.80 483.6 L417.90 499.9 L418.00 491.2 L418.10 501.9 L418.20 489.1 L418.30 488.4 L418.40 493.0 L418.50 484.7 L418.60 501.5 L418.70 488.7 L418.80 503.5 L418.90 500.5 L419.00 493.2 L419.10 493.9 L419.20 486.5 L419.30 502.4 L419.40 490.2 L419.50 491.0 L419.60 512.1 L419.70 500.7 L419.80 496.0 L419.90 485.0 L420.00 495.1 L420.10 495.7 L420.20 492.5 L420.30 495.1 L420.40 500.5 L420.50 497.5 L420.60 492.9 L420.70 503.9 L420.80 503.0 L420.90 489.2 L421.00 492.6 L421.10 501.9 L421.20 490.4 L421.30 496.5 L421.40 487.9 L421.50 503.5 L421.60 488.2 L421.70 491.7 L421.80 492.7 L421.90 494.1 L422.00 498.3 L422.10 501.3 L422.20 498.4 L422.30 505.4 L422.40 493.4 L422.50 506.5 L422.60 506.6 L422.70 499.8 L422.80 493.4 L422.90 490.1 L423.00 493.4 L423.10 489.3 L423.20 485.5 L423.30 493.7 L423.40 485.4 L423.50 514.7 L423.60 491.5 L423.70 488.3 L423.80 489.7 L423.90 491.0 L424.00 480.7 L424.10 490.0 L424.20 484.0 L424.30 500.4 L424.40 478.1 L424.50 488.4 L424.60 495.9 L424.70 499.4 L424.80 493.6 L424.90 491.6 L425.00 500.4 L425.10 497.9 L425.20 490.5 L425.30 497.0 L425.40 499.9 L425.50 504.5 L425.60 497.5 L425.70 490.0 L425.80 496.9 L425.90 504.4 L426.00 487.2 L426.10 495.0 L426.20 500.4 L426.30 502.0 L426.40 490.7 L426.50 494.5 L426.60 496.6 L426.70 490.3 L426.80 485.9 L426.90 499.2 L427.00 502.1 L427.10 497.7 L427.20 502.4 L427.30 501.6 L427.40 503.8 L427.50 489.5 L427.60 489.2 L427.70 493.6 L427.80 493.5 L427.90 494.4 L428.00 501.9 L428.10 500.5 L428.20 505.6 L428.30 500.8 L428.40 504.8 L428.50 495.7 L428.60 489.7 L428.70 494.9 L428.80 489.4 L428.90 491.1 L429.00 499.1 L429.10 502.3 L429.20 503.3 L429.30 502.8 L429.40 509.5 L429.50 497.3 L429.60 510.3 L429.70 497.6 L429.80 505.8 L429.90 495.4 L430.00 507.6 L430.10 507.3 L430.20 496.5 L430.30 498.3 L430.40 498.7 L430.50 482.0 L430.60 512.8 L430.70 505.9 L430.80 499.3 L430.90 506.0 L431.00 502.5 L431.10 492.4 L431.20 499.3 L431.30 507.4 L431.40 499.2 L431.50 515.2 L431.60 507.6 L431.70 508.2 L431.80 499.9 L431.90 504.4 L432.00 496.6 L432.10 497.4 L432.20 503.5 L432.30 508.5 L432.40 499.1 L432.50 493.3 L432.60 493.4 L432.70 508.2 L432.80 508.8 L432.90 503.6 L433.00 498.6 L433.10 497.8 L433.20 496.3 L433.30 493.6 L433.40 497.4 L433.50 490.3 L433.60 502.1 L433.70 497.5 L433.80 499.6 L433.90 502.3 L434.00 495.0 L434.10 511.6 L434.20 503.9 L434.30 489.9 L434.40 498.2 L434.50 514.2 L434.60 487.8 L434.70 493.0 L434.80 496.6 L434.90 503.2 L435.00 495.1 L435.10 496.9 L435.20 504.3 L435.30 492.7 L435.40 498.1 L435.50 495.2 L435.60 490.8 L435.70 503.3 L435.80 507.2 L435.90 492.7 L436.00 508.4 L436.10 505.2 L436.20 495.4 L436.30 502.5 L436.40 493.0 L436.50 490.0 L436.60 492.4 L436.70 506.9 L436.80 498.9 L436.90 495.2 L437.00 500.5 L437.10 492.4 L437.20 503.2 L437.30 501.9 L437.40 495.7 L437.50 503.7 L437.60 501.9 L437.70 493.2 L437.80 494.2 L437.90 494.4 L438.00 490.6 L438.10 500.7 L438.20 499.4 L438.30 501.1 L438.40 507.2 L438.50 497.0 L438.60 495.9 L438.70 490.0 L438.80 501.0 L438.90 485.3 L439.00 496.0 L439.10 495.2 L439.20 499.2 L439.30 497.8 L439.40 489.9 L439.50 492.9 L439.60 496.7 L439.70 487.9 L439.80 501.1 L439.90 502.0 L440.00 493.1 L440.10 493.6 L440.20 505.3 L440.30 492.6 L440.40 500.3 L440.50 507.5 L440.60 497.7 L440.70 492.4 L440.80 501.0 L440.90 499.8 L441.00 509.5 L441.10 499.8 L441.20 510.3 L441.30 501.9 L441.40 504.7 L441.50 507.6 L441.60 515.1 L441.70 496.7 L441.80 496.5 L441.90 502.3 L442.00 510.5 L442.10 501.9 L442.20 496.5 L442.30 511.7 L442.40 495.6 L442.50 502.5 L442.60 503.8 L442.70 496.8 L442.80 517.0 L442.90 506.8 L443.00 509.0 L443.10 498.4 L443.20 509.6 L443.30 500.6 L443.40 496.5 L443.50 504.0 L443.60 506.1 L443.70 502.0 L443.80 508.0 L443.90 501.7 L444.00 495.3 L444.10 501.7 L444.20 504.3 L444.30 496.1 L444.40 503.6 L444.50 493.0 L444.60 506.6 L444.70 504.2 L444.80 503.2 L444.90 499.2 L445.00 505.5 L445.10 497.0 L445.20 503.6 L445.30 499.1 L445.40 496.5 L445.50 497.6 L445.60 490.5 L445.70 516.5 L445.80 494.3 L445.90 494.5 L446.00 488.7 L446.10 494.9 L446.20 486.6 L446.30 494.7 L446.40 483.1 L446.50 498.5 L446.60 498.8 L446.70 488.9 L446.80 495.3 L446.90 494.6 L447.00 489.1 L447.10 486.1 L447.20 487.2 L447.30 504.4 L447.40 505.1 L447.50 487.2 L447.60 494.5 L447.70 489.3 L447.80 488.9 L447.90 498.3 L448.00 507.4 L448.10 498.8 L448.20 495.5 L448.30 503.3 L448.40 502.1 L448.50 490.7 L448.60 489.1 L448.70 491.4 L448.80 501.8 L448.90 503.3 L449.00 498.6 L449.10 498.2 L449.20 495.9 L449.30 494.6 L449.40 501.8 L449.50 486.7 L449.60 489.0 L449.70 484.3 L449.80 498.4 L449.90 496.8 L450.00 500.8 L450.10 489.0 L450.20 491.1 L450.30 485.5 L450.40 487.4 L450.50 500.4 L450.60 498.9 L450.70 500.7 L450.80 520.0 L450.90 500.2 L451.00 491.4 L451.10 495.7 L451.20 498.8 L451.30 482.5 L451.40 486.1 L451.50 494.9 L451.60 485.6 L451.70 494.9 L451.80 480.7 L451.90 493.1 L452.00 492.5 L452.10 479.6 L452.20 482.2 L452.30 483.0 L452.40 477.8 L452.50 491.9 L452.60 485.5 L452.70 482.2 L452.80 501.9 L452.90 492.6 L453.00 484.1 L453.10 492.5 L453.20 484.2 L453.30 473.6 L453.40 478.5 L453.50 484.4 L453.60 478.4 L453.70 489.4 L453.80 474.9 L453.90 482.6 L454.00 470.6 L454.10 487.4 L454.20 491.3 L454.30 485.3 L454.40 486.6 L454.50 488.6 L454.60 485.4 L454.70 475.9 L454.80 508.9 L454.90 480.5 L455.00 474.4 L455.10 482.0 L455.20 486.9 L455.30 493.2 L455.40 474.2 L455.50 474.0 L455.60 484.0 L455.70 491.1 L455.80 489.3 L455.90 478.6 L456.00 489.5 L456.10 491.6 L456.20 491.3 L456.30 486.6 L456.40 483.1 L456.50 476.4 L456.60 480.2 L456.70 482.2 L456.80 467.0 L456.90 489.9 L457.00 478.9 L457.10 462.1 L457.20 486.5 L457.30 493.4 L457.40 488.1 L457.50 482.7 L457.60 474.0 L457.70 477.1 L457.80 483.0 L457.90 482.6 L458.00 478.0 L458.10 482.7 L458.20 477.5 L458.30 488.2 L458.40 487.2 L458.50 478.6 L458.60 480.0 L458.70 470.3 L458.80 477.1 L458.90 495.9 L459.00 491.4 L459.10 476.8 L459.20 482.4 L459.30 487.3 L459.40 487.0 L459.50 493.2 L459.60 493.6 L459.70 483.5 L459.80 477.5 L459.90 476.6 L460.00 492.8 L460.10 478.1 L460.20 492.5 L460.30 479.5 L460.40 489.4 L460.50 485.7 L460.60 493.3 L460.70 498.4 L460.80 494.0 L460.90 497.5 L461.00 483.5 L461.10 497.5 L461.20 497.8 L461.30 488.0 L461.40 495.3 L461.50 489.3 L461.60 498.2 L461.70 501.5 L461.80 495.1 L461.90 506.5 L462.00 499.3 L462.10 494.8 L462.20 489.0 L462.30 501.1 L462.40 506.3 L462.50 505.6 L462.60 497.4 L462.70 499.7 L462.80 509.4 L462.90 507.5 L463.00 505.9 L463.10 494.4 L463.20 502.1 L463.30 510.1 L463.40 498.3 L463.50 504.1 L463.60 512.0 L463.70 502.9 L463.80 496.3 L463.90 507.0 L464.00 505.5 L464.10 513.1 L464.20 501.2 L464.30 503.1 L464.40 505.6 L464.50 511.9 L464.60 508.5 L464.70 504.9 L464.80 505.4 L464.90 501.1 L465.00 509.6 L465.10 525.0 L465.20 510.0 L465.30 517.9 L465.40 516.8 L465.50 509.2 L465.60 512.1 L465.70 513.7 L465.80 503.2 L465.90 512.4 L466.00 517.4 L466.10 518.6 L466.20 511.9 L466.30 507.2 L466.40 511.9 L466.50 509.2 L466.60 502.3 L466.70 510.4 L466.80 514.7 L466.90 513.4 L467.00 504.2 L467.10 497.7 L467.20 497.4 L467.30 512.7 L467.40 508.2 L467.50 497.5 L467.60 501.8 L467.70 509.8 L467.80 510.0 L467.90 503.9 L468.00 503.9 L468.10 505.7 L468.20 502.4 L468.30 496.2 L468.40 509.2 L468.50 511.8 L468.60 487.4 L468.70 512.2 L468.80 497.9 L468.90 498.2 L469.00 502.2 L469.10 504.9 L469.20 498.1 L469.30 490.9 L469.40 507.4 L469.50 522.0 L469.60 511.2 L469.70 507.4 L469.80 514.8 L469.90 516.4 L470.00 508.4 L470.10 503.1 L470.20 504.0 L470.30 506.1 L470.40 505.3 L470.50 504.5 L470.60 516.8 L470.70 512.7 L470.80 510.4 L470.90 512.3 L471.00 516.5 L471.10 514.8 L471.20 518.9 L471.30 519.0 L471.40 515.2 L471.50 505.9 L471.60 508.5 L471.70 518.9 L471.80 518.2 L471.90 518.3 L472.00 527.0 L472.10 511.0 L472.20 509.0 L472.30 505.2 L472.40 506.2 L472.50 501.2 L472.60 500.5 L472.70 515.6 L472.80 509.3 L472.90 500.2 L473.00 507.0 L473.10 498.9 L473.20 501.8 L473.30 506.8 L473.40 507.7 L473.50 500.6 L473.60 506.4 L473.70 503.7 L473.80 497.8 L473.90 507.5 L474.00 503.7 L474.10 512.4 L474.20 496.3 L474.30 484.9 L474.40 501.6 L474.50 511.5 L474.60 500.8 L474.70 503.0 L474.80 502.8 L474.90 505.9 L475.00 496.7 L475.10 501.2 L475.20 507.4 L475.30 500.2 L475.40 510.9 L475.50 501.7 L475.60 507.8 L475.70 502.8 L475.80 500.5 L475.90 501.1 L476.00 502.6 L476.10 503.8 L476.20 497.5 L476.30 503.9 L476.40 503.7 L476.50 507.3 L476.60 495.1 L476.70 498.3 L476.80 501.7 L476.90 510.5 L477.00 503.5 L477.10 493.5 L477.20 494.5 L477.30 501.2 L477.40 505.9 L477.50 521.5 L477.60 498.9 L477.70 505.4 L477.80 517.8 L477.90 505.6 L478.00 494.3 L478.10 486.3 L478.20 492.8 L478.30 497.7 L478.40 485.7 L478.50 489.8 L478.60 502.2 L478.70 488.8 L478.80 488.9 L478.90 496.2 L479.00 497.9 L479.10 491.5 L479.20 488.2 L479.30 490.1 L479.40 485.1 L479.50 487.3 L479.60 493.4 L479.70 488.4 L479.80 485.8 L479.90 488.1 L480.00 479.8 L480.10 492.5 L480.20 479.1 L480.30 482.4 L480.40 494.8 L480.50 480.7 L480.60 482.1 L480.70 494.1 L480.80 495.8 L480.90 491.6 L481.00 485.6 L481.10 490.0 L481.20 489.4 L481.30 504.1 L481.40 498.4 L481.50 494.5 L481.60 498.7 L481.70 491.9 L481.80 506.2 L481.90 502.5 L482.00 502.6 L482.10 501.0 L482.20 505.3 L482.30 504.8 L482.40 509.2 L482.50 499.6 L482.60 505.0 L482.70 510.5 L482.80 506.3 L482.90 517.0 L483.00 516.9 L483.10 513.5 L483.20 510.3 L483.30 510.8 L483.40 522.3 L483.50 510.4 L483.60 512.1 L483.70 514.3 L483.80 515.7 L483.90 516.2 L484.00 530.0 L484.10 527.6 L484.20 516.9 L484.30 522.5 L484.40 513.8 L484.50 513.2 L484.60 526.3 L484.70 518.2 L484.80 522.9 L484.90 509.8 L485.00 517.7 L485.10 512.6 L485.20 515.2 L485.30 523.8 L485.40 512.2 L485.50 513.1 L485.60 518.7 L485.70 518.1 L485.80 531.9 L485.90 517.9 L486.00 508.9 L486.10 513.6 L486.20 512.9 L486.30 507.9 L486.40 514.6 L486.50 501.1 L486.60 510.9 L486.70 504.4 L486.80 512.8 L486.90 504.7 L487.00 498.4 L487.10 498.6 L487.20 506.5 L487.30 502.5 L487.40 497.5 L487.50 502.3 L487.60 511.1 L487.70 501.5 L487.80 506.0 L487.90 505.0 L488.00 508.3 L488.10 501.5 L488.20 507.7 L488.30 509.8 L488.40 508.4 L488.50 498.0 L488.60 509.4 L488.70 500.0 L488.80 508.7 L488.90 509.2 L489.00 508.1 L489.10 510.0 L489.20 510.4 L489.30 496.1 L489.40 505.7 L489.50 496.5 L489.60 493.5 L489.70 495.3 L489.80 508.2 L489.90 500.3 L490.00 508.0 L490.10 502.4 L490.20 505.0 L490.30 519.5 L490.40 506.7 L490.50 505.2 L490.60 500.0 L490.70 498.5 L490.80 505.1 L490.90 517.3 L491.00 494.2 L491.10 510.1 L491.20 498.7 L491.30 500.6 L491.40 499.2 L491.50 506.4 L491.60 498.5 L491.70 504.0 L491.80 501.9 L491.90 510.0 L492.00 499.6 L492.10 502.7 L492.20 506.2 L492.30 500.9 L492.40 495.7 L492.50 490.5 L492.60 505.9 L492.70 508.5 L492.80 491.5 L492.90 507.0 L493.00 505.8 L493.10 491.5 L493.20 502.6 L493.30 488.8 L493.40 491.7 L493.50 518.5 L493.60 502.2 L493.70 488.7 L493.80 499.1 L493.90 491.0 L494.00 489.5 L494.10 500.7 L494.20 502.5 L494.30 503.1 L494.40 503.6 L494.50 498.2 L494.60 489.6 L494.70 504.9 L494.80 483.3 L494.90 487.5 L495.00 496.8 L495.10 487.6 L495.20 500.2 L495.30 487.9 L495.40 493.6 L495.50 486.9 L495.60 491.7 L495.70 498.9 L495.80 498.9 L495.90 493.9 L496.00 499.8 L496.10 488.2 L496.20 494.5 L496.30 498.2 L496.40 482.4 L496.50 497.1 L496.60 494.1 L496.70 486.6 L496.80 486.6 L496.90 492.4 L497.00 488.5 L497.10 479.6 L497.20 484.8 L497.30 492.5 L497.40 491.0 L497.50 479.6 L497.60 489.9 L497.70 493.1 L497.80 482.8 L497.90 490.5 L498.00 483.8 L498.10 485.9 L498.20 479.3 L498.30 491.0 L498.40 475.2 L498.50 486.5 L498.60 491.5 L498.70 474.1 L498.80 486.8 L498.90 480.6 L499.00 471.0 L499.10 478.7 L499.20 486.6 L499.30 478.9 L499.40 482.4 L499.50 495.0 L499.60 489.5 L499.70 494.8 L499.80 479.6 L499.90 477.8 L500.00 486.4 L500.10 491.8 L500.20 480.9 L500.30 491.7 L500.40 493.1 L500.50 489.2 L500.60 487.6 L500.70 485.2 L500.80 499.4 L500.90 488.0 L501.00 499.4 L501.10 500.7 L501.20 494.9 L501.30 500.3 L501.40 495.9 L501.50 481.1 L501.60 485.5 L501.70 483.8 L501.80 507.6 L501.90 480.2 L502.00 485.4 L502.10 484.5 L502.20 492.2 L502.30 497.4 L502.40 483.3 L502.50 496.6 L502.60 494.7 L502.70 492.2 L502.80 490.5 L502.90 485.3 L503.00 491.0 L503.10 488.0 L503.20 497.6 L503.30 490.8 L503.40 493.6 L503.50 478.9 L503.60 483.9 L503.70 487.4 L503.80 494.5 L503.90 480.8 L504.00 491.5 L504.10 475.6 L504.20 489.5 L504.30 486.2 L504.40 489.9 L504.50 475.2 L504.60 490.0 L504.70 475.2 L504.80 468.4 L504.90 476.5 L505.00 473.4 L505.10 474.2 L505.20 479.8 L505.30 477.3 L505.40 481.3 L505.50 475.1 L505.60 471.8 L505.70 473.6 L505.80 463.2 L505.90 472.2 L506.00 466.7 L506.10 471.9 L506.20 469.5 L506.30 484.9 L506.40 467.0 L506.50 470.5 L506.60 468.1 L506.70 469.7 L506.80 467.7 L506.90 477.2 L507.00 483.5 L507.10 473.0 L507.20 470.3 L507.30 483.8 L507.40 478.5 L507.50 478.9 L507.60 477.2 L507.70 469.7 L507.80 473.0 L507.90 477.4 L508.00 472.5 L508.10 479.5 L508.20 467.3 L508.30 478.2 L508.40 473.0 L508.50 476.1 L508.60 470.0 L508.70 468.8 L508.80 476.0 L508.90 486.1 L509.00 483.0 L509.10 470.3 L509.20 477.1 L509.30 480.2 L509.40 477.6 L509.50 487.9 L509.60 482.1 L509.70 474.8 L509.80 479.9 L509.90 470.9 L510.00 481.6 L510.10 482.5 L510.20 470.3 L510.30 486.6 L510.40 468.8 L510.50 481.8 L510.60 474.0 L510.70 489.4 L510.80 471.3 L510.90 469.2 L511.00 486.2 L511.10 470.0 L511.20 487.7 L511.30 476.8 L511.40 489.0 L511.50 504.3 L511.60 492.8 L511.70 478.6 L511.80 476.4 L511.90 486.8 L512.00 479.0 L512.10 496.8 L512.20 493.0 L512.30 486.9 L512.40 495.5 L512.50 493.5 L512.60 500.6 L512.70 497.0 L512.80 489.9 L512.90 480.5 L513.00 497.3 L513.10 498.7 L513.20 505.8 L513.30 482.1 L513.40 491.7 L513.50 498.3 L513.60 485.4 L513.70 485.6 L513.80 492.1 L513.90 485.2 L514.00 492.4 L514.10 487.9 L514.20 496.0 L514.30 504.1 L514.40 489.3 L514.50 493.6 L514.60 491.1 L514.70 502.4 L514.80 495.8 L514.90 502.5 L515.00 498.1 L515.10 507.2 L515.20 497.7 L515.30 497.2 L515.40 511.0 L515.50 502.2 L515.60 516.2 L515.70 508.1 L515.80 503.2 L515.90 504.8 L516.00 510.1 L516.10 513.2 L516.20 512.7 L516.30 511.2 L516.40 520.8 L516.50 526.7 L516.60 516.5 L516.70 525.0 L516.80 524.7 L516.90 516.1 L517.00 525.2 L517.10 532.3 L517.20 527.3 L517.30 524.3 L517.40 525.5 L517.50 523.5 L517.60 514.8 L517.70 529.7 L517.80 532.4 L517.90 529.7 L518.00 531.0 L518.10 531.1 L518.20 532.3 L518.30 537.1 L518.40 524.2 L518.50 522.7 L518.60 535.3 L518.70 532.0 L518.80 537.1 L518.90 532.2 L519.00 531.9 L519.10 544.4 L519.20 534.4 L519.30 544.0 L519.40 547.7 L519.50 545.0 L519.60 526.7 L519.70 548.0 L519.80 549.4 L519.90 547.8 L520.00 541.2 L520.10 554.9 L520.20 551.5 L520.30 555.5 L520.40 546.3 L520.50 554.8 L520.60 555.9 L520.70 555.9 L520.80 553.8 L520.90 562.7 L521.00 561.1 L521.10 552.8 L521.20 552.3 L521.30 565.7 L521.40 563.9 L521.50 569.0 L521.60 560.8 L521.70 560.4 L521.80 563.0 L521.90 571.4" fill="none" stroke="#000" stroke-width="1"/>
<path d="M533.00 572.0 L533.10 562.1 L533.20 569.2 L533.30 564.2 L533.40 563.6 L533.50 569.8 L533.60 562.7 L533.70 567.4 L533.80 558.4 L533.90 556.1 L534.00 560.6 L534.10 557.3 L534.20 548.2 L534.30 558.1 L534.40 559.0 L534.50 559.7 L534.60 553.8 L534.70 545.9 L534.80 545.1 L534.90 554.7 L535.00 554.2 L535.10 553.3 L535.20 541.7 L535.30 544.7 L535.40 548.9 L535.50 534.7 L535.60 540.6 L535.70 532.8 L535.80 544.4 L535.90 535.8 L536.00 537.7 L536.10 533.9 L536.20 530.9 L536.30 533.5 L536.40 529.0 L536.50 523.2 L536.60 528.4 L536.70 521.4 L536.80 531.2 L536.90 504.2 L537.00 522.9 L537.10 524.3 L537.20 526.6 L537.30 506.6 L537.40 517.0 L537.50 506.4 L537.60 511.0 L537.70 507.5 L537.80 505.4 L537.90 517.3 L538.00 508.1 L538.10 513.5 L538.20 512.9 L538.30 507.2 L538.40 512.3 L538.50 508.3 L538.60 509.1 L538.70 507.7 L538.80 495.5 L538.90 497.8 L539.00 496.0 L539.10 500.2 L539.20 498.3 L539.30 510.7 L539.40 498.6 L539.50 509.9 L539.60 509.2 L539.70 491.1 L539.80 507.6 L539.90 489.0 L540.00 496.2 L540.10 521.8 L540.20 489.7 L540.30 505.8 L540.40 486.2 L540.50 484.8 L540.60 502.4 L540.70 497.3 L540.80 498.1 L540.90 499.1 L541.00 491.6 L541.10 482.6 L541.20 500.0 L541.30 495.6 L541.40 498.4 L541.50 492.5 L541.60 488.4 L541.70 490.7 L541.80 494.4 L541.90 485.9 L542.00 491.4 L542.10 493.1 L542.20 458.5 L542.30 477.5 L542.40 493.3 L542.50 477.7 L542.60 480.4 L542.70 482.0 L542.80 482.2 L542.90 490.6 L543.00 490.5 L543.10 475.1 L543.20 478.6 L543.30 506.1 L543.40 471.8 L543.50 499.5 L543.60 476.0 L543.70 482.6 L543.80 466.5 L543.90 471.9 L544.00 480.1 L544.10 477.6 L544.20 466.1 L544.30 479.1 L544.40 483.6 L544.50 481.5 L544.60 466.0 L544.70 465.7 L544.80 483.6 L544.90 476.7 L545.00 473.0 L545.10 466.8 L545.20 462.5 L545.30 459.6 L545.40 473.5 L545.50 477.2 L545.60 463.9 L545.70 462.0 L545.80 456.6 L545.90 479.1 L546.00 466.1 L546.10 460.3 L546.20 456.5 L546.30 456.6 L546.40 470.2 L546.50 460.0 L546.60 477.1 L546.70 470.0 L546.80 472.9 L546.90 470.7 L547.00 464.8 L547.10 479.7 L547.20 464.4 L547.30 473.7 L547.40 480.3 L547.50 462.8 L547.60 473.8 L547.70 477.5 L547.80 484.1 L547.90 487.8 L548.00 486.2 L548.10 457.0 L548.20 471.7 L548.30 465.7 L548.40 471.1 L548.50 473.1 L548.60 487.0 L548.70 479.9 L548.80 478.9 L548.90 470.6 L549.00 471.7 L549.10 482.6 L549.20 471.3 L549.30 464.4 L549.40 441.3 L549.50 483.9 L549.60 465.3 L549.70 482.7 L549.80 472.7 L549.90 484.7 L550.00 475.6 L550.10 490.6 L550.20 476.9 L550.30 474.6 L550.40 488.2 L550.50 490.1 L550.60 487.6 L550.70 507.3 L550.80 499.2 L550.90 482.4 L551.00 489.4 L551.10 501.0 L551.20 503.1 L551.30 497.3 L551.40 485.8 L551.50 501.6 L551.60 493.8 L551.70 497.5 L551.80 490.5 L551.90 484.7 L552.00 484.4 L552.10 496.2 L552.20 495.3 L552.30 490.0 L552.40 482.7 L552.50 490.4 L552.60 497.2 L552.70 499.9 L552.80 498.9 L552.90 504.1 L553.00 509.0 L553.10 492.2 L553.20 494.9 L553.30 510.8 L553.40 510.0 L553.50 499.1 L553.60 515.0 L553.70 507.8 L553.80 505.4 L553.90 515.4 L554.00 517.1 L554.10 514.4 L554.20 513.1 L554.30 511.6 L554.40 509.1 L554.50 519.5 L554.60 517.4 L554.70 509.5 L554.80 517.7 L554.90 511.0 L555.00 519.3 L555.10 519.0 L555.20 519.8 L555.30 514.4 L555.40 512.5 L555.50 507.0 L555.60 516.9 L555.70 516.9 L555.80 515.2 L555.90 512.6 L556.00 510.0 L556.10 518.2 L556.20 527.2 L556.30 521.9 L556.40 528.0 L556.50 515.4 L556.60 525.1 L556.70 533.7 L556.80 534.6 L556.90 521.7 L557.00 534.8 L557.10 525.0 L557.20 536.3 L557.30 529.2 L557.40 537.6 L557.50 536.1 L557.60 525.8 L557.70 529.7 L557.80 525.3 L557.90 539.8 L558.00 526.1 L558.10 531.2 L558.20 531.1 L558.30 534.2 L558.40 538.1 L558.50 539.8 L558.60 528.1 L558.70 533.9 L558.80 527.1 L558.90 527.5 L559.00 538.7 L559.10 529.6 L559.20 536.1 L559.30 526.6 L559.40 541.4 L559.50 528.9 L559.60 534.9 L559.70 542.4 L559.80 530.6 L559.90 535.2 L560.00 528.6 L560.10 539.6 L560.20 527.1 L560.30 534.2 L560.40 541.2 L560.50 536.1 L560.60 537.1 L560.70 542.0 L560.80 530.5 L560.90 531.1 L561.00 537.4 L561.10 537.3 L561.20 544.2 L561.30 532.8 L561.40 532.5 L561.50 544.0 L561.60 543.4 L561.70 533.3 L561.80 541.7 L561.90 541.8 L562.00 540.8 L562.10 534.8 L562.20 546.9 L562.30 544.3 L562.40 527.5 L562.50 560.0 L562.60 546.7 L562.70 546.8 L562.80 549.2 L562.90 545.5 L563.00 550.7 L563.10 554.5 L563.20 538.0 L563.30 542.5 L563.40 537.4 L563.50 545.5 L563.60 548.0 L563.70 538.6 L563.80 546.1 L563.90 554.4 L564.00 552.2 L564.10 543.7 L564.20 557.1 L564.30 544.8 L564.40 546.2 L564.50 546.5 L564.60 549.3 L564.70 545.3 L564.80 546.4 L564.90 550.1 L565.00 547.8 L565.10 564.3 L565.20 555.0 L565.30 554.4 L565.40 567.9 L565.50 553.4 L565.60 567.2 L565.70 564.8 L565.80 567.5 L565.90 565.4 L566.00 561.5 L566.10 569.3 L566.20 575.7 L566.30 563.7 L566.40 568.4 L566.50 561.2 L566.60 575.9 L566.70 575.3 L566.80 569.4 L566.90 587.9 L567.00 567.0 L567.10 575.0 L567.20 564.0 L567.30 578.8 L567.40 579.4 L567.50 571.2 L567.60 583.6 L567.70 566.1 L567.80 573.8 L567.90 571.0 L568.00 573.8 L568.10 567.4 L568.20 571.7 L568.30 573.6 L568.40 571.3 L568.50 573.5 L568.60 571.1 L568.70 562.6 L568.80 570.4 L568.90 574.1 L569.00 566.8 L569.10 574.0 L569.20 576.5 L569.30 564.7 L569.40 570.0 L569.50 568.7 L569.60 565.4 L569.70 572.9 L569.80 566.1 L569.90 570.0 L570.00 571.0 L570.10 566.7 L570.20 578.0 L570.30 569.3 L570.40 572.9 L570.50 570.4 L570.60 578.7 L570.70 575.1 L570.80 575.0 L570.90 577.3 L571.00 579.3 L571.10 582.3 L571.20 571.7 L571.30 581.7 L571.40 586.3 L571.50 573.1 L571.60 573.7 L571.70 570.8 L571.80 580.4 L571.90 586.8 L572.00 592.3 L572.10 590.2 L572.20 587.5 L572.30 577.8 L572.40 587.0 L572.50 587.4 L572.60 579.8 L572.70 580.5 L572.80 594.1 L572.90 581.7 L573.00 586.9 L573.10 583.9 L573.20 585.4 L573.30 593.9 L573.40 584.7 L573.50 586.3 L573.60 590.2 L573.70 589.6 L573.80 585.8 L573.90 583.3 L574.00 581.2 L574.10 584.5 L574.20 592.0 L574.30 582.2 L574.40 580.9 L574.50 587.8 L574.60 584.4 L574.70 582.8 L574.80 592.1 L574.90 586.1 L575.00 585.5 L575.10 584.2 L575.20 595.6 L575.30 581.9 L575.40 582.9 L575.50 591.0 L575.60 608.7 L575.70 583.8 L575.80 597.7 L575.90 586.3 L576.00 600.9 L576.10 587.8 L576.20 585.1 L576.30 590.7 L576.40 598.3 L576.50 592.6 L576.60 588.6 L576.70 589.3 L576.80 586.7 L576.90 602.6 L577.00 593.6 L577.10 600.4 L577.20 601.9 L577.30 591.2 L577.40 602.7 L577.50 603.3 L577.60 598.0 L577.70 593.5 L577.80 590.3 L577.90 593.6 L578.00 600.1 L578.10 598.3 L578.20 598.9 L578.30 591.0 L578.40 592.3 L578.50 593.7 L578.60 586.0 L578.70 585.1 L578.80 585.9 L578.90 585.3 L579.00 594.2 L579.10 582.1 L579.20 592.0 L579.30 595.5 L579.40 584.1 L579.50 584.0 L579.60 580.9 L579.70 592.6 L579.80 597.3 L579.90 587.6 L580.00 587.0 L580.10 591.0 L580.20 597.2 L580.30 585.1 L580.40 591.5 L580.50 600.9 L580.60 589.9 L580.70 592.8 L580.80 588.5 L580.90 596.7 L581.00 593.3 L581.10 604.8 L581.20 594.6 L581.30 594.7 L581.40 619.3 L581.50 599.4 L581.60 599.8 L581.70 596.1 L581.80 594.8 L581.90 600.1 L582.00 588.4 L582.10 590.6 L582.20 592.8 L582.30 590.9 L582.40 589.7 L582.50 595.8 L582.60 593.6 L582.70 589.7 L582.80 596.0 L582.90 600.5 L583.00 587.7 L583.10 586.5 L583.20 590.8 L583.30 593.8 L583.40 594.0 L583.50 593.8 L583.60 586.9 L583.70 591.2 L583.80 589.3 L583.90 594.2 L584.00 592.9 L584.10 599.4 L584.20 594.7 L584.30 584.5 L584.40 597.8 L584.50 588.6 L584.60 596.6 L584.70 594.7 L584.80 597.3 L584.90 585.6 L585.00 596.9 L585.10 585.0 L585.20 590.2 L585.30 585.1 L585.40 592.0 L585.50 593.8 L585.60 583.4 L585.70 588.6 L585.80 589.2 L585.90 584.2 L586.00 593.1 L586.10 585.2 L586.20 593.4 L586.30 597.6 L586.40 596.3 L586.50 593.7 L586.60 594.8 L586.70 591.0 L586.80 588.3 L586.90 591.9 L587.00 584.2 L587.10 594.0 L587.20 595.5 L587.30 594.3 L587.40 595.2 L587.50 589.1 L587.60 586.9 L587.70 586.4 L587.80 590.2 L587.90 585.2 L588.00 591.9 L588.10 597.0 L588.20 588.8 L588.30 597.4 L588.40 583.8 L588.50 589.5 L588.60 597.0 L588.70 585.9 L588.80 587.0 L588.90 590.5 L589.00 592.9 L589.10 597.1 L589.20 613.6 L589.30 594.4 L589.40 599.1 L589.50 587.6 L589.60 586.8 L589.70 594.3 L589.80 584.0 L589.90 594.4 L590.00 584.6 L590.10 586.4 L590.20 598.2 L590.30 592.8 L590.40 595.6 L590.50 594.5 L590.60 586.7 L590.70 594.5 L590.80 601.1 L590.90 586.7 L591.00 597.9 L591.10 594.5 L591.20 598.6 L591.30 600.9 L591.40 595.0 L591.50 598.7 L591.60 595.6 L591.70 590.5 L591.80 599.6 L591.90 589.3 L592.00 597.4 L592.10 600.6 L592.20 599.2 L592.30 601.9 L592.40 594.5 L592.50 590.9 L592.60 589.7 L592.70 588.0 L592.80 594.0 L592.90 597.9 L593.00 599.7 L593.10 585.9 L593.20 599.6 L593.30 573.7 L593.40 589.1 L593.50 592.3 L593.60 595.0 L593.70 586.3 L593.80 593.6 L593.90 587.0 L594.00 590.3 L594.10 596.4 L594.20 596.1 L594.30 588.8 L594.40 590.7 L594.50 592.8 L594.60 593.9 L594.70 608.7 L594.80 584.2 L594.90 596.7 L595.00 594.6 L595.10 585.4 L595.20 587.4 L595.30 589.9 L595.40 584.5 L595.50 581.6 L595.60 582.2 L595.70 585.8 L595.80 594.7 L595.90 584.5 L596.00 583.8 L596.10 592.9 L596.20 590.2 L596.30 588.5 L596.40 596.9 L596.50 589.1 L596.60 584.2 L596.70 581.5 L596.80 594.2 L596.90 583.8 L597.00 585.2 L597.10 584.5 L597.20 587.1 L597.30 592.2 L597.40 582.5 L597.50 591.3 L597.60 583.6 L597.70 604.8 L597.80 590.3 L597.90 590.5 L598.00 598.9 L598.10 585.8 L598.20 588.2 L598.30 597.0 L598.40 590.2 L598.50 599.4 L598.60 600.4 L598.70 595.6 L598.80 591.6 L598.90 594.0 L599.00 591.8 L599.10 591.1 L599.20 590.7 L599.30 593.8 L599.40 589.6 L599.50 588.6 L599.60 595.9 L599.70 597.3 L599.80 587.0 L599.90 600.1 L600.00 600.4 L600.10 586.5 L600.20 599.3 L600.30 585.1 L600.40 596.4 L600.50 593.2 L600.60 589.3 L600.70 591.7 L600.80 596.3 L600.90 585.1 L601.00 587.7 L601.10 581.7 L601.20 598.5 L601.30 585.2 L601.40 579.8 L601.50 583.4 L601.60 589.7 L601.70 591.9 L601.80 582.9 L601.90 584.5 L602.00 587.3 L602.10 595.2 L602.20 590.9 L602.30 583.6 L602.40 581.6 L602.50 589.4 L602.60 579.7 L602.70 589.7 L602.80 594.5 L602.90 594.1 L603.00 589.8 L603.10 588.0 L603.20 588.3 L603.30 583.5 L603.40 599.8 L603.50 585.4 L603.60 585.9 L603.70 585.0 L603.80 592.5 L603.90 579.4 L604.00 589.3 L604.10 581.4 L604.20 581.5 L604.30 586.4 L604.40 587.9 L604.50 583.4 L604.60 583.5 L604.70 583.4 L604.80 583.5 L604.90 600.3 L605.00 592.6 L605.10 596.8 L605.20 588.9 L605.30 584.8 L605.40 586.8 L605.50 589.9 L605.60 581.0 L605.70 581.7 L605.80 582.3 L605.90 598.0 L606.00 587.9 L606.10 575.8 L606.20 578.9 L606.30 587.4 L606.40 580.4 L606.50 584.7 L606.60 580.9 L606.70 575.9 L606.80 581.4 L606.90 583.3 L607.00 580.2 L607.10 580.6 L607.20 588.4 L607.30 584.9 L607.40 587.6 L607.50 579.8 L607.60 581.6 L607.70 588.2 L607.80 594.6 L607.90 588.0 L608.00 581.3 L608.10 579.2 L608.20 581.5 L608.30 586.0 L608.40 590.8 L608.50 586.1 L608.60 589.4 L608.70 592.0 L608.80 577.5 L608.90 582.8 L609.00 578.2 L609.10 575.1 L609.20 582.8 L609.30 581.4 L609.40 578.4 L609.50 570.5 L609.60 572.6 L609.70 570.7 L609.80 578.0 L609.90 576.7 L610.00 571.9 L610.10 584.2 L610.20 581.6 L610.30 580.9 L610.40 584.4 L610.50 568.4 L610.60 579.0 L610.70 585.2 L610.80 581.7 L610.90 577.8 L611.00 570.3 L611.10 579.2 L611.20 583.9 L611.30 583.1 L611.40 571.9 L611.50 571.5 L611.60 574.3 L611.70 577.2 L611.80 577.5 L611.90 582.4 L612.00 572.1 L612.10 598.4 L612.20 577.0 L612.30 580.6 L612.40 577.4 L612.50 572.1 L612.60 580.6 L612.70 586.6 L612.80 572.7 L612.90 570.8 L613.00 574.9 L613.10 572.1 L613.20 571.9 L613.30 568.8 L613.40 575.5 L613.50 577.0 L613.60 584.3 L613.70 577.6 L613.80 579.5 L613.90 569.7 L614.00 571.2 L614.10 572.2 L614.20 571.4 L614.30 575.1 L614.40 580.7 L614.50 582.3 L614.60 583.2 L614.70 575.6 L614.80 585.1 L614.90 578.5 L615.00 572.8 L615.10 574.3 L615.20 575.8 L615.30 584.9 L615.40 569.5 L615.50 579.6 L615.60 585.7 L615.70 578.5 L615.80 581.9 L615.90 571.1 L616.00 573.2 L616.10 581.1 L616.20 582.4 L616.30 577.6 L616.40 583.2 L616.50 569.2 L616.60 569.7 L616.70 572.9 L616.80 568.1 L616.90 572.9 L617.00 569.9 L617.10 579.3 L617.20 575.3 L617.30 566.6 L617.40 580.0 L617.50 567.4 L617.60 567.6 L617.70 578.3 L617.80 574.6 L617.90 580.2 L618.00 571.4 L618.10 574.1 L618.20 573.7 L618.30 570.5 L618.40 566.9 L618.50 568.5 L618.60 573.7 L618.70 567.7 L618.80 579.0 L618.90 577.1 L619.00 577.9 L619.10 568.5 L619.20 575.6 L619.30 576.6 L619.40 571.6 L619.50 575.7 L619.60 562.2 L619.70 565.8 L619.80 563.4 L619.90 562.4 L620.00 572.3 L620.10 566.9 L620.20 559.6 L620.30 560.5 L620.40 572.6 L620.50 565.4 L620.60 574.0 L620.70 573.1 L620.80 566.1 L620.90 546.8 L621.00 573.1 L621.10 570.0 L621.20 562.2 L621.30 570.2 L621.40 566.6 L621.50 570.6 L621.60 562.1 L621.70 572.7 L621.80 558.0 L621.90 575.4 L622.00 572.5 L622.10 581.9 L622.20 566.7 L622.30 575.1 L622.40 572.6 L622.50 556.6 L622.60 573.4 L622.70 573.6 L622.80 566.8 L622.90 566.3 L623.00 568.9 L623.10 566.1 L623.20 573.3 L623.30 556.4 L623.40 558.5 L623.50 567.7 L623.60 572.3 L623.70 566.2 L623.80 572.6 L623.90 567.9 L624.00 563.7 L624.10 559.4 L624.20 571.6 L624.30 563.3 L624.40 562.4 L624.50 570.1 L624.60 559.8 L624.70 559.0 L624.80 567.7 L624.90 563.7 L625.00 556.1 L625.10 554.9 L625.20 566.7 L625.30 567.0 L625.40 571.5 L625.50 566.0 L625.60 566.9 L625.70 570.7 L625.80 565.8 L625.90 552.0 L626.00 553.8 L626.10 570.0 L626.20 562.5 L626.30 550.8 L626.40 564.6 L626.50 549.0 L626.60 552.2 L626.70 552.9 L626.80 551.2 L626.90 549.1 L627.00 560.5 L627.10 550.0 L627.20 548.8 L627.30 560.1 L627.40 545.2 L627.50 543.9 L627.60 561.6 L627.70 553.3 L627.80 550.0 L627.90 554.6 L628.00 548.4 L628.10 569.9 L628.20 553.3 L628.30 549.6 L628.40 549.2 L628.50 555.2 L628.60 546.5 L628.70 553.0 L628.80 541.5 L628.90 551.9 L629.00 547.7 L629.10 555.4 L629.20 548.1 L629.30 541.7 L629.40 553.7 L629.50 528.7 L629.60 556.1 L629.70 541.5 L629.80 537.2 L629.90 545.2 L630.00 537.7 L630.10 555.2 L630.20 552.9 L630.30 545.3 L630.40 544.9 L630.50 542.8 L630.60 542.7 L630.70 538.8 L630.80 539.7 L630.90 549.6 L631.00 548.6 L631.10 542.2 L631.20 550.6 L631.30 546.1 L631.40 533.6 L631.50 536.2 L631.60 533.2 L631.70 543.6 L631.80 548.1 L631.90 550.0 L632.00 550.9 L632.10 549.5 L632.20 548.3 L632.30 549.5 L632.40 552.6 L632.50 543.2 L632.60 535.4 L632.70 535.4 L632.80 540.8 L632.90 544.8 L633.00 550.0 L633.10 551.7 L633.20 536.8 L633.30 550.9 L633.40 518.9 L633.50 544.3 L633.60 540.8 L633.70 539.1 L633.80 539.5 L633.90 537.1 L634.00 548.6 L634.10 541.0 L634.20 546.1 L634.30 537.4 L634.40 545.6 L634.50 523.8 L634.60 540.9 L634.70 549.7 L634.80 555.1 L634.90 547.4 L635.00 543.1 L635.10 542.6 L635.20 553.7 L635.30 543.7 L635.40 548.4 L635.50 538.6 L635.60 542.4 L635.70 545.7 L635.80 538.2 L635.90 536.9 L636.00 530.0 L636.10 534.8 L636.20 531.9 L636.30 545.6 L636.40 542.7 L636.50 540.2 L636.60 541.5 L636.70 539.7 L636.80 533.0 L636.90 533.0 L637.00 528.9 L637.10 532.8 L637.20 534.3 L637.30 522.1 L637.40 527.4 L637.50 537.1 L637.60 524.1 L637.70 521.4 L637.80 523.9 L637.90 529.1 L638.00 531.2 L638.10 529.5 L638.20 539.4 L638.30 532.6 L638.40 536.6 L638.50 534.1 L638.60 527.8 L638.70 535.5 L638.80 528.1 L638.90 545.5 L639.00 529.6 L639.10 549.1 L639.20 535.3 L639.30 544.4 L639.40 549.2 L639.50 545.3 L639.60 533.6 L639.70 538.6 L639.80 548.9 L639.90 534.7 L640.00 552.9 L640.10 552.8 L640.20 554.8 L640.30 550.8 L640.40 544.1 L640.50 548.6 L640.60 541.0 L640.70 556.8 L640.80 543.2 L640.90 547.1 L641.00 551.4 L641.10 549.9 L641.20 559.0 L641.30 543.6 L641.40 540.6 L641.50 556.1 L641.60 560.2 L641.70 542.4 L641.80 548.3 L641.90 556.1 L642.00 553.1 L642.10 556.7 L642.20 548.6 L642.30 560.0 L642.40 543.0 L642.50 558.1 L642.60 569.2 L642.70 552.6 L642.80 548.7 L642.90 556.2 L643.00 550.7 L643.10 553.7 L643.20 552.3 L643.30 553.5 L643.40 563.3 L643.50 567.1 L643.60 570.9 L643.70 569.3 L643.80 571.5 L643.90 562.2 L644.00 576.0 L644.10 560.3 L644.20 569.3 L644.30 574.1 L644.40 574.7 L644.50 562.7 L644.60 566.6 L644.70 575.0 L644.80 567.4 L644.90 555.9 L645.00 567.4 L645.10 557.6 L645.20 574.6 L645.30 567.3 L645.40 570.1 L645.50 556.7 L645.60 561.2 L645.70 570.8 L645.80 566.0 L645.90 564.3 L646.00 556.6 L646.10 560.7 L646.20 547.1 L646.30 567.0 L646.40 558.4 L646.50 572.1 L646.60 561.9 L646.70 568.8 L646.80 572.5 L646.90 572.6 L647.00 574.9 L647.10 572.9 L647.20 563.3 L647.30 562.3 L647.40 574.4 L647.50 559.8 L647.60 575.1 L647.70 567.2 L647.80 564.6 L647.90 548.0 L648.00 574.1 L648.10 561.8 L648.20 573.0 L648.30 565.7 L648.40 565.5 L648.50 568.4 L648.60 572.0 L648.70 566.0 L648.80 566.1 L648.90 565.6 L649.00 560.5 L649.10 575.4 L649.20 558.8 L649.30 572.7 L649.40 578.0 L649.50 572.3 L649.60 595.4 L649.70 568.5 L649.80 559.2 L649.90 573.5 L650.00 560.2 L650.10 571.5 L650.20 566.6 L650.30 573.6 L650.40 572.3 L650.50 563.1 L650.60 572.9 L650.70 570.0 L650.80 566.8 L650.90 581.3 L651.00 587.0 L651.10 571.3 L651.20 572.9 L651.30 588.9 L651.40 584.2 L651.50 573.0 L651.60 580.5 L651.70 579.9 L651.80 576.2 L651.90 570.9 L652.00 575.0 L652.10 573.0 L652.20 581.7 L652.30 573.4 L652.40 569.3 L652.50 565.3 L652.60 574.8 L652.70 574.5 L652.80 579.3 L652.90 561.6 L653.00 574.4 L653.10 574.6 L653.20 578.3 L653.30 565.4 L653.40 563.4 L653.50 567.8 L653.60 561.9 L653.70 570.2 L653.80 565.3 L653.90 573.5 L654.00 571.8 L654.10 572.2 L654.20 583.5 L654.30 576.2 L654.40 572.5 L654.50 576.9 L654.60 562.0 L654.70 574.5 L654.80 573.5 L654.90 567.1 L655.00 561.4 L655.10 567.6 L655.20 569.1 L655.30 561.7 L655.40 567.5 L655.50 568.4 L655.60 571.9 L655.70 559.8 L655.80 572.4 L655.90 569.4 L656.00 557.1 L656.10 540.4 L656.20 559.7 L656.30 562.0 L656.40 558.7 L656.50 563.9 L656.60 559.4 L656.70 549.4 L656.80 549.5 L656.90 555.8 L657.00 550.5 L657.10 548.8 L657.20 543.8 L657.30 548.1 L657.40 554.0 L657.50 551.6 L657.60 545.1 L657.70 553.0 L657.80 543.9 L657.90 540.7 L658.00 536.6 L658.10 544.9 L658.20 556.5 L658.30 549.0 L658.40 555.3 L658.50 552.4 L658.60 542.6 L658.70 548.4 L658.80 538.0 L658.90 530.5 L659.00 529.5 L659.10 549.4 L659.20 528.8 L659.30 516.4 L659.40 534.4 L659.50 527.7 L659.60 526.4 L659.70 546.1 L659.80 526.9 L659.90 543.7 L660.00 546.4 L660.10 538.3 L660.20 542.7 L660.30 543.4 L660.40 541.9 L660.50 527.7 L660.60 531.4 L660.70 526.1 L660.80 525.9 L660.90 522.5 L661.00 527.2 L661.10 514.6 L661.20 529.2 L661.30 521.2 L661.40 549.1 L661.50 524.9 L661.60 515.1 L661.70 515.7 L661.80 520.2 L661.90 529.4 L662.00 524.5 L662.10 512.2 L662.20 513.3 L662.30 519.6 L662.40 525.5 L662.50 515.5 L662.60 528.5 L662.70 513.5 L662.80 513.5 L662.90 509.2 L663.00 509.7 L663.10 502.2 L663.20 518.6 L663.30 526.3 L663.40 511.3 L663.50 512.4 L663.60 511.2 L663.70 512.4 L663.80 515.2 L663.90 523.7 L664.00 512.2 L664.10 504.3 L664.20 515.7 L664.30 509.7 L664.40 513.5 L664.50 507.7 L664.60 509.1 L664.70 499.1 L664.80 507.1 L664.90 501.1 L665.00 510.9 L665.10 505.8 L665.20 502.2 L665.30 505.8 L665.40 495.0 L665.50 495.0 L665.60 504.9 L665.70 503.7 L665.80 507.5 L665.90 517.4 L666.00 498.1 L666.10 518.8 L666.20 517.0 L666.30 517.8 L666.40 505.0 L666.50 517.0 L666.60 512.1 L666.70 513.0 L666.80 519.6 L666.90 498.2 L667.00 504.3 L667.10 516.7 L667.20 511.2 L667.30 506.2 L667.40 513.2 L667.50 503.5 L667.60 494.7 L667.70 505.3 L667.80 508.0 L667.90 512.7 L668.00 498.8 L668.10 513.6 L668.20 499.8 L668.30 509.2 L668.40 498.9 L668.50 495.3 L668.60 496.2 L668.70 509.6 L668.80 507.0 L668.90 502.2 L669.00 513.1 L669.10 516.2 L669.20 512.9 L669.30 511.7 L669.40 506.7 L669.50 520.9 L669.60 520.1 L669.70 509.1 L669.80 504.8 L669.90 520.8 L670.00 512.1 L670.10 501.0 L670.20 501.2 L670.30 528.0 L670.40 510.8 L670.50 512.3 L670.60 506.9 L670.70 521.7 L670.80 515.8 L670.90 510.7 L671.00 514.8 L671.10 520.2 L671.20 501.7 L671.30 505.1 L671.40 503.7 L671.50 513.7 L671.60 523.5 L671.70 509.0 L671.80 511.7 L671.90 510.3 L672.00 523.0 L672.10 510.5 L672.20 528.5 L672.30 529.7 L672.40 520.0 L672.50 526.7 L672.60 514.2 L672.70 521.4 L672.80 514.9 L672.90 514.0 L673.00 528.7 L673.10 517.3 L673.20 510.5 L673.30 516.0 L673.40 521.4 L673.50 507.9 L673.60 520.1 L673.70 509.2 L673.80 528.1 L673.90 515.1 L674.00 519.4 L674.10 516.5 L674.20 521.7 L674.30 519.9 L674.40 524.9 L674.50 529.2 L674.60 515.3 L674.70 510.9 L674.80 508.0 L674.90 530.3 L675.00 508.5 L675.10 508.1 L675.20 527.0 L675.30 509.7 L675.40 525.6 L675.50 528.7 L675.60 515.6 L675.70 520.4 L675.80 528.4 L675.90 508.6 L676.00 516.2 L676.10 512.2 L676.20 523.5 L676.30 521.9 L676.40 522.4 L676.50 507.3 L676.60 506.3 L676.70 516.7 L676.80 501.6 L676.90 512.4 L677.00 503.8 L677.10 522.1 L677.20 503.4 L677.30 516.5 L677.40 502.5 L677.50 520.2 L677.60 517.6 L677.70 501.7 L677.80 505.6 L677.90 494.0 L678.00 508.1 L678.10 503.0 L678.20 505.8 L678.30 498.1 L678.40 513.0 L678.50 518.2 L678.60 503.2 L678.70 501.6 L678.80 504.6 L678.90 524.7 L679.00 515.8 L679.10 520.4 L679.20 525.8 L679.30 509.0 L679.40 528.7 L679.50 519.7 L679.60 525.4 L679.70 515.5 L679.80 517.9 L679.90 522.3 L680.00 514.5 L680.10 519.9 L680.20 517.0 L680.30 530.3 L680.40 513.1 L680.50 521.2 L680.60 514.3 L680.70 528.0 L680.80 531.0 L680.90 531.5 L681.00 533.9 L681.10 523.3 L681.20 520.0 L681.30 526.9 L681.40 517.8 L681.50 533.4 L681.60 519.1 L681.70 538.1 L681.80 525.4 L681.90 521.7 L682.00 533.2 L682.10 545.1 L682.20 532.8 L682.30 548.0 L682.40 550.7 L682.50 549.1 L682.60 538.3 L682.70 548.8 L682.80 551.5 L682.90 563.1 L683.00 548.1 L683.10 567.0 L683.20 551.9 L683.30 547.9 L683.40 577.4 L683.50 580.1 L683.60 581.2 L683.70 574.9 L683.80 570.6 L683.90 571.5" fill="none" stroke="#000" stroke-width="1"/>
<path d="M390.5 448 L390.5 490" stroke="#000" stroke-width="1.2"/>
<path d="M396.5 450 L396.5 488" stroke="#000" stroke-width="1.2"/>
<path d="M394.5 470 L394.5 518" stroke="#000" stroke-width="1.2"/>
<path d="M510.5 458 L510.5 485" stroke="#000" stroke-width="1.2"/>
<path d="M486.5 500 L486.5 560" stroke="#000" stroke-width="1.2"/>
<path d="M670.5 500 L670.5 596" stroke="#000" stroke-width="1.2"/>
<path d="M636.5 512 L636.5 540" stroke="#000" stroke-width="1.2"/>
<path d="M313.5 550 L313.5 580" stroke="#000" stroke-width="1.2"/>
<path d="M233.5 455 L233.5 480" stroke="#000" stroke-width="1.2"/>
<path d="M546.5 460 L546.5 480" stroke="#000" stroke-width="1.2"/>
<rect x="219.5" y="440.5" width="469" height="181" fill="none" stroke="#000" stroke-width="1"/>
<line x1="214" y1="620.5" x2="219.5" y2="620.5" stroke="#000" stroke-width="1"/>
<line x1="208" y1="599.5" x2="219.5" y2="599.5" stroke="#000" stroke-width="1"/>
<line x1="214" y1="579.5" x2="219.5" y2="579.5" stroke="#000" stroke-width="1"/>
<line x1="208" y1="561.5" x2="219.5" y2="561.5" stroke="#000" stroke-width="1"/>
<line x1="214" y1="545.5" x2="219.5" y2="545.5" stroke="#000" stroke-width="1"/>
<line x1="208" y1="529.5" x2="219.5" y2="529.5" stroke="#000" stroke-width="1"/>
<line x1="214" y1="514.5" x2="219.5" y2="514.5" stroke="#000" stroke-width="1"/>
<line x1="208" y1="500.5" x2="219.5" y2="500.5" stroke="#000" stroke-width="1"/>
<line x1="214" y1="487.5" x2="219.5" y2="487.5" stroke="#000" stroke-width="1"/>
<line x1="208" y1="474.5" x2="219.5" y2="474.5" stroke="#000" stroke-width="1"/>
<line x1="214" y1="462.5" x2="219.5" y2="462.5" stroke="#000" stroke-width="1"/>
<line x1="208" y1="451.5" x2="219.5" y2="451.5" stroke="#000" stroke-width="1"/>
<line x1="214" y1="440.5" x2="219.5" y2="440.5" stroke="#000" stroke-width="1"/>
<text x="202" y="456.5" font-size="16" fill="#111" textLength="24.5" lengthAdjust="spacingAndGlyphs" text-anchor="end">2.2</text>
<text x="202" y="479.8" font-size="16" fill="#111" textLength="24.5" lengthAdjust="spacingAndGlyphs" text-anchor="end">2.0</text>
<text x="202" y="505.5" font-size="16" fill="#111" textLength="24.5" lengthAdjust="spacingAndGlyphs" text-anchor="end">1.8</text>
<text x="202" y="534.3" font-size="16" fill="#111" textLength="24.5" lengthAdjust="spacingAndGlyphs" text-anchor="end">1.6</text>
<text x="202" y="566.9" font-size="16" fill="#111" textLength="24.5" lengthAdjust="spacingAndGlyphs" text-anchor="end">1.4</text>
<text x="202" y="604.5" font-size="16" fill="#111" textLength="24.5" lengthAdjust="spacingAndGlyphs" text-anchor="end">1.2</text>
<text x="0" y="0" font-size="16" fill="#111" textLength="97" lengthAdjust="spacingAndGlyphs" text-anchor="middle" transform="translate(166,531.5) rotate(-90)">e Tperp/Tpar</text>
<line x1="220.5" y1="621" x2="220.5" y2="626.5" stroke="#000" stroke-width="1"/>
<line x1="238.5" y1="621" x2="238.5" y2="632.5" stroke="#000" stroke-width="1"/>
<line x1="256.5" y1="621" x2="256.5" y2="626.5" stroke="#000" stroke-width="1"/>
<line x1="274.5" y1="621" x2="274.5" y2="626.5" stroke="#000" stroke-width="1"/>
<line x1="292.5" y1="621" x2="292.5" y2="626.5" stroke="#000" stroke-width="1"/>
<line x1="310.5" y1="621" x2="310.5" y2="626.5" stroke="#000" stroke-width="1"/>
<line x1="328.5" y1="621" x2="328.5" y2="626.5" stroke="#000" stroke-width="1"/>
<line x1="346.5" y1="621" x2="346.5" y2="626.5" stroke="#000" stroke-width="1"/>
<line x1="364.5" y1="621" x2="364.5" y2="626.5" stroke="#000" stroke-width="1"/>
<line x1="382.5" y1="621" x2="382.5" y2="626.5" stroke="#000" stroke-width="1"/>
<line x1="400.5" y1="621" x2="400.5" y2="626.5" stroke="#000" stroke-width="1"/>
<line x1="418.5" y1="621" x2="418.5" y2="626.5" stroke="#000" stroke-width="1"/>
<line x1="436.5" y1="621" x2="436.5" y2="626.5" stroke="#000" stroke-width="1"/>
<line x1="454.5" y1="621" x2="454.5" y2="632.5" stroke="#000" stroke-width="1"/>
<line x1="472.5" y1="621" x2="472.5" y2="626.5" stroke="#000" stroke-width="1"/>
<line x1="490.5" y1="621" x2="490.5" y2="626.5" stroke="#000" stroke-width="1"/>
<line x1="508.5" y1="621" x2="508.5" y2="626.5" stroke="#000" stroke-width="1"/>
<line x1="526.5" y1="621" x2="526.5" y2="626.5" stroke="#000" stroke-width="1"/>
<line x1="544.5" y1="621" x2="544.5" y2="626.5" stroke="#000" stroke-width="1"/>
<line x1="562.5" y1="621" x2="562.5" y2="626.5" stroke="#000" stroke-width="1"/>
<line x1="580.5" y1="621" x2="580.5" y2="626.5" stroke="#000" stroke-width="1"/>
<line x1="598.5" y1="621" x2="598.5" y2="626.5" stroke="#000" stroke-width="1"/>
<line x1="616.5" y1="621" x2="616.5" y2="626.5" stroke="#000" stroke-width="1"/>
<line x1="634.5" y1="621" x2="634.5" y2="626.5" stroke="#000" stroke-width="1"/>
<line x1="652.5" y1="621" x2="652.5" y2="626.5" stroke="#000" stroke-width="1"/>
<line x1="670.5" y1="621" x2="670.5" y2="632.5" stroke="#000" stroke-width="1"/>
<line x1="688.5" y1="621" x2="688.5" y2="626.5" stroke="#000" stroke-width="1"/>
<text x="261.1" y="653" font-size="16" fill="#111" textLength="44.67" lengthAdjust="spacingAndGlyphs" text-anchor="end">00:00</text>
<text x="477.1" y="653" font-size="16" fill="#111" textLength="44.67" lengthAdjust="spacingAndGlyphs" text-anchor="end">12:00</text>
<text x="693.1" y="653" font-size="16" fill="#111" textLength="44.67" lengthAdjust="spacingAndGlyphs" text-anchor="end">00:00</text>
<text x="261.1" y="673" font-size="16" fill="#111" textLength="44.37" lengthAdjust="spacingAndGlyphs" text-anchor="end">4.225</text>
<text x="477.1" y="673" font-size="16" fill="#111" textLength="44.37" lengthAdjust="spacingAndGlyphs" text-anchor="end">5.756</text>
<text x="693.1" y="673" font-size="16" fill="#111" textLength="44.37" lengthAdjust="spacingAndGlyphs" text-anchor="end">3.179</text>
<text x="168" y="673" font-size="16" fill="#111" textLength="11" lengthAdjust="spacingAndGlyphs" text-anchor="end">R</text>
<text x="174.5" y="677" font-size="11" fill="#111" textLength="6.5" lengthAdjust="spacingAndGlyphs" text-anchor="end">E</text>
<text x="261.1" y="693" font-size="16" fill="#111" textLength="59.83" lengthAdjust="spacingAndGlyphs" text-anchor="end">-10.580</text>
<text x="477.1" y="693" font-size="16" fill="#111" textLength="49.97" lengthAdjust="spacingAndGlyphs" text-anchor="end">-1.544</text>
<text x="693.1" y="693" font-size="16" fill="#111" textLength="59.83" lengthAdjust="spacingAndGlyphs" text-anchor="end">-16.190</text>
<text x="175" y="693" font-size="16" fill="#111" textLength="37.59" lengthAdjust="spacingAndGlyphs" text-anchor="end">MLat</text>
<text x="261.1" y="713" font-size="16" fill="#111" textLength="44.37" lengthAdjust="spacingAndGlyphs" text-anchor="end">2.247</text>
<text x="477.1" y="713" font-size="16" fill="#111" textLength="44.37" lengthAdjust="spacingAndGlyphs" text-anchor="end">5.398</text>
<text x="693.1" y="713" font-size="16" fill="#111" textLength="44.37" lengthAdjust="spacingAndGlyphs" text-anchor="end">8.125</text>
<text x="175" y="713" font-size="16" fill="#111" textLength="29.34" lengthAdjust="spacingAndGlyphs" text-anchor="end">MLT</text>
<text x="261.1" y="733" font-size="16" fill="#111" textLength="44.37" lengthAdjust="spacingAndGlyphs" text-anchor="end">4.373</text>
<text x="477.1" y="733" font-size="16" fill="#111" textLength="44.37" lengthAdjust="spacingAndGlyphs" text-anchor="end">5.760</text>
<text x="693.1" y="733" font-size="16" fill="#111" textLength="44.37" lengthAdjust="spacingAndGlyphs" text-anchor="end">3.447</text>
<text x="175" y="733" font-size="16" fill="#111" textLength="8.64" lengthAdjust="spacingAndGlyphs" text-anchor="end">L</text>
<text x="252.4" y="756.5" font-size="16" fill="#111" textLength="403.5" lengthAdjust="spacingAndGlyphs">2012-12-01 (336) 23:00 to 2012-12-03 (338) 01:00</text>
<path d="M347.5 447.5 L347.5 364 Q347.5 359.5 352 359.5 L586 359.5 Q590.5 359.5 590.5 364 L590.5 447.5 Z" fill="#f4f4f4" stroke="#9a9a9a" stroke-width="1"/>
<path d="M348 384 L348 364.5 Q348 360 352.5 360 L585.5 360 Q590 360 590 364.5 L590 384 Z" fill="url(#pmtitle)"/>
<rect x="348" y="384" width="242" height="63" fill="#fbfbfb"/>
<path d="M360 369.5 L368 369.5 L364 375 Z" fill="#9a9a9a"/>
<text x="469" y="378" font-size="13.5" font-weight="bold" fill="#787878" textLength="115" lengthAdjust="spacingAndGlyphs" text-anchor="middle">Progress Monitor</text>
<g stroke="#8a8a8a" stroke-width="1.8"><line x1="569.5" y1="369" x2="576.5" y2="376"/><line x1="576.5" y1="369" x2="569.5" y2="376"/></g>
<text x="469" y="396.5" font-size="16" font-weight="bold" fill="#2a2233" textLength="109" lengthAdjust="spacingAndGlyphs" text-anchor="middle">running batch</text>
<text x="363.6" y="409.5" font-size="10" fill="#1a1525" textLength="212.4" lengthAdjust="spacingAndGlyphs" stroke="#1a1525" stroke-width="0.35">write /hom...walk3/product_20121229_00.png</text>
<rect x="349.5" y="411.5" width="218" height="19" fill="#e8e8e8" stroke="#6483b4" stroke-width="1"/>
<rect x="350" y="412" width="198" height="18" fill="#a2b4ca"/>
<rect x="568.5" y="411.5" width="20" height="19" fill="url(#btng)" stroke="#8a9aab" stroke-width="1"/>
<rect x="572" y="414" width="14" height="14" fill="#e0404a" rx="2" stroke="#a02030" stroke-width="1"/>
<g stroke="#ffffff" stroke-width="2.2"><line x1="575.5" y1="417.5" x2="582.5" y2="424.5"/><line x1="582.5" y1="417.5" x2="575.5" y2="424.5"/></g>
<text x="469" y="443" font-size="13.5" font-weight="bold" fill="#2a2233" textLength="176.5" lengthAdjust="spacingAndGlyphs" text-anchor="middle">57/62 (41.4/min, eta 8.7 s)</text>
</svg>
</body></html>
